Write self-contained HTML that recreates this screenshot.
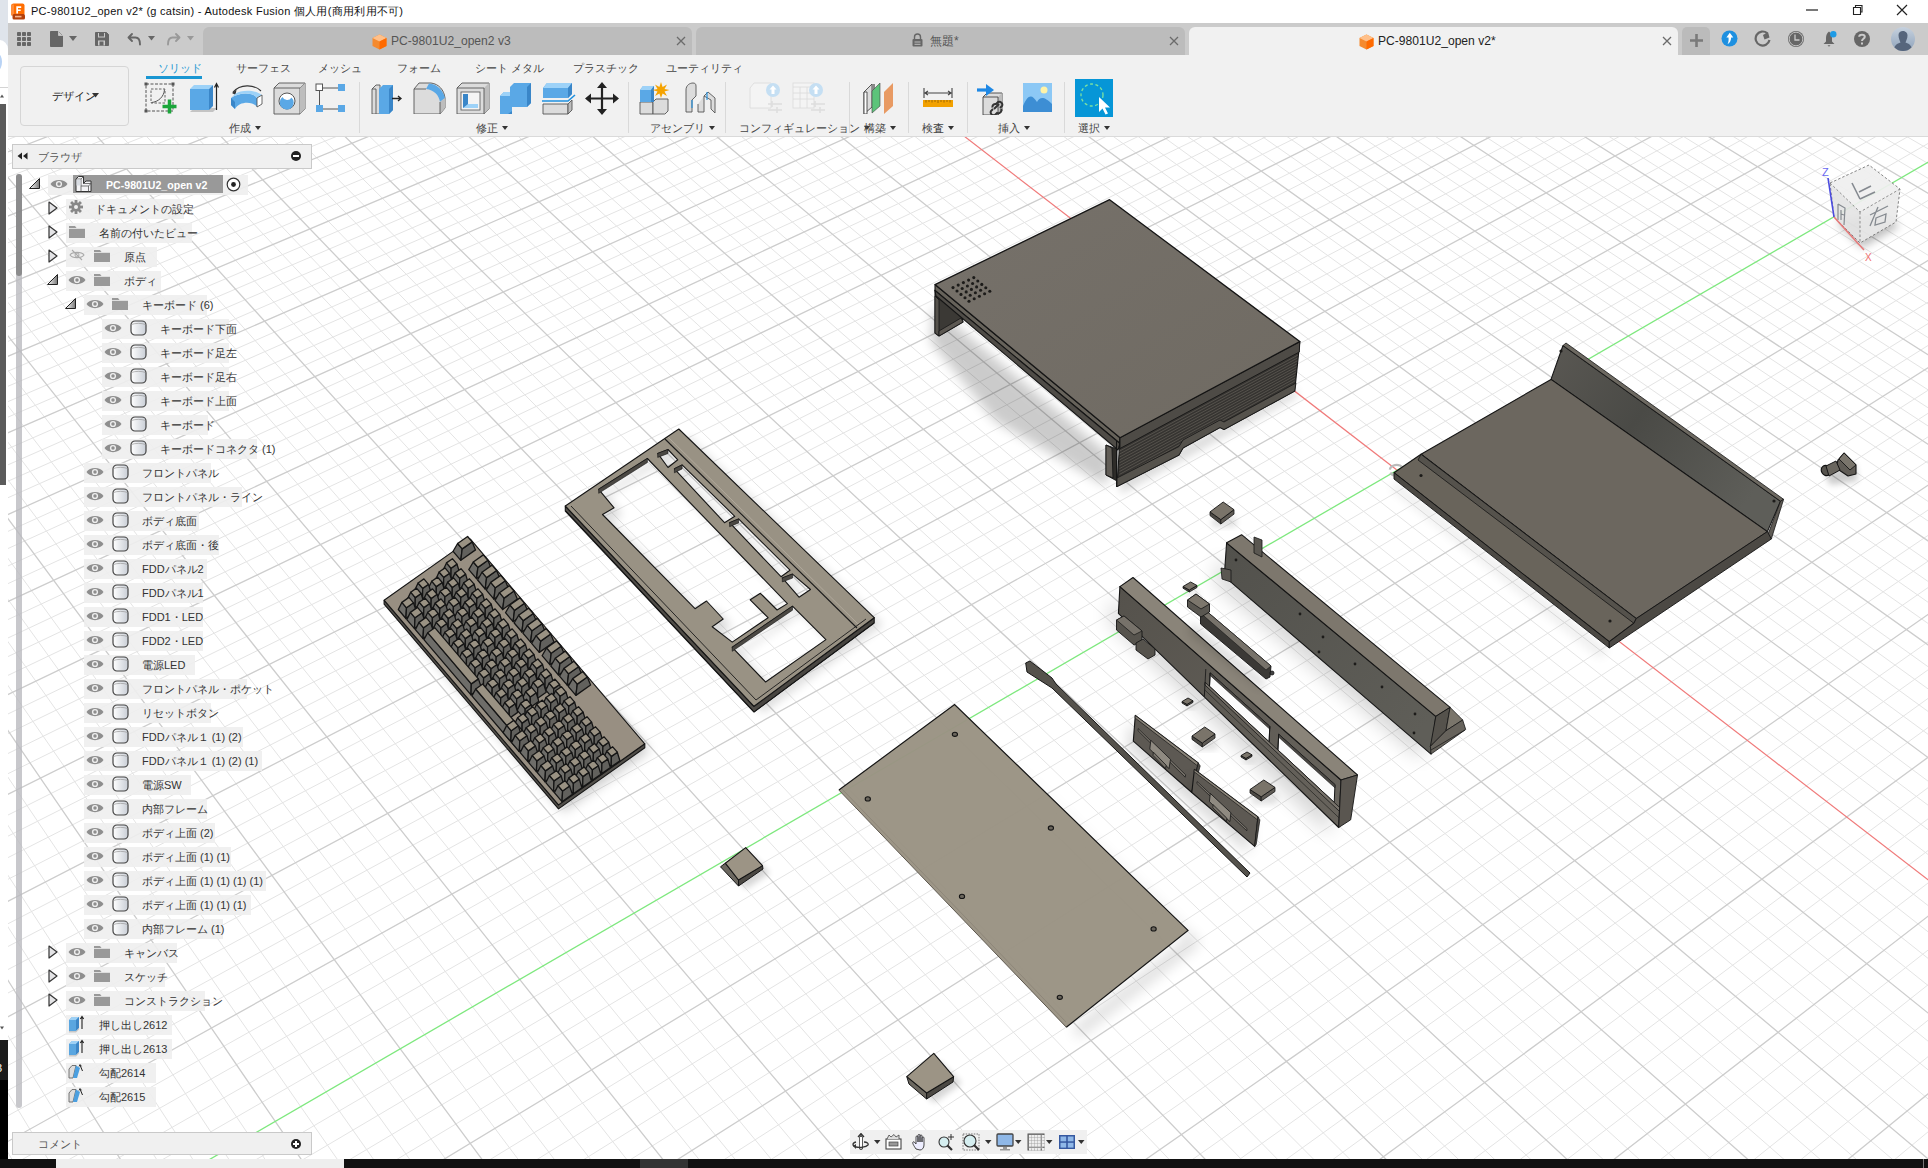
<!DOCTYPE html><html><head><meta charset="utf-8"><style>
*{margin:0;padding:0}
html,body{width:1928px;height:1168px;overflow:hidden;background:#fff;font-family:"Liberation Sans",sans-serif}
.title{position:absolute;left:31px;top:4px;font-size:11px;letter-spacing:0.28px;color:#111;white-space:nowrap;line-height:15px}
.tabt{position:absolute;top:34px;font-size:12.1px;line-height:15px;white-space:nowrap}
.tl{position:absolute;font-size:11px;line-height:14px;white-space:nowrap;color:#444}
.dd{display:inline-block;width:0;height:0;border-left:3.5px solid transparent;border-right:3.5px solid transparent;border-top:4px solid #333;margin-left:4px;vertical-align:2px}
.bhead{position:absolute;left:12px;top:144px;width:300px;height:25px;background:#f0f0f0;border:1px solid #c9c9c9;box-sizing:border-box}
.bhead .btitle{position:absolute;left:25px;top:5px;font-size:11px;line-height:14px;color:#555}
.bhead .rew{position:absolute;left:4px;top:6px;font-size:7px;letter-spacing:-3px;color:#222;line-height:12px}
.bhead .minus{position:absolute;left:278px;top:6px;width:10px;height:10px;border-radius:50%;background:#222}
.bhead .minus:after{content:"";position:absolute;left:2px;top:4px;width:6px;height:2px;background:#fff}
.bhead .plus{position:absolute;left:278px;top:6px;width:10px;height:10px;border-radius:50%;background:#222}
.bhead .plus:after{content:"";position:absolute;left:2px;top:4px;width:6px;height:2px;background:#fff}
.bhead .plus:before{content:"";position:absolute;left:4px;top:2px;width:2px;height:6px;background:#fff;z-index:1}
.rbg{position:absolute;height:20px;margin-top:-0.5px;background:rgba(238,238,238,0.9)}
.rtxt{position:absolute;font-size:11px;line-height:19px;margin-top:1px;color:#333;white-space:nowrap}
</style></head><body>
<svg style="position:absolute;left:0;top:0" width="1928" height="1168" viewBox="0 0 1928 1168"><defs><clipPath id="vp"><rect x="8" y="137" width="1920" height="1022"/></clipPath></defs><g clip-path="url(#vp)"><rect x="8" y="137" width="1920" height="1022" fill="#fff"/>
<path d="M-567.5 320.7L1171.0 -336.9M-561.4 331.6L1181.2 -331.2M-555.3 342.6L1191.4 -325.4M-549.0 353.7L1201.7 -319.5M-536.4 376.1L1222.4 -307.8M-530.0 387.5L1232.9 -301.8M-523.6 399.0L1243.4 -295.9M-517.1 410.6L1254.1 -289.8M-503.9 434.1L1275.5 -277.7M-497.2 446.0L1286.4 -271.5M-490.4 458.1L1297.3 -265.3M-483.6 470.2L1308.3 -259.1M-469.7 494.9L1330.5 -246.5M-462.7 507.4L1341.7 -240.2M-455.6 520.0L1353.0 -233.8M-448.4 532.8L1364.3 -227.3M-433.9 558.7L1387.3 -214.3M-426.5 571.8L1398.9 -207.7M-419.0 585.1L1410.6 -201.1M-411.5 598.5L1422.4 -194.4M-396.2 625.7L1446.2 -180.9M-388.5 639.5L1458.2 -174.1M-380.6 653.5L1470.3 -167.2M-372.7 667.6L1482.5 -160.3M-356.6 696.2L1507.2 -146.3M-348.5 710.7L1519.7 -139.2M-340.2 725.4L1532.2 -132.1M-331.9 740.3L1544.9 -124.9M-314.9 770.4L1570.5 -110.4M-306.3 785.8L1583.4 -103.1M-297.6 801.3L1596.4 -95.7M-288.8 816.9L1609.6 -88.3M-270.9 848.8L1636.1 -73.2M-261.8 864.9L1649.5 -65.6M-252.7 881.3L1663.1 -57.9M-243.4 897.8L1676.7 -50.2M-224.5 931.5L1704.3 -34.6M-214.9 948.6L1718.2 -26.7M-205.1 965.9L1732.3 -18.7M-195.3 983.4L1746.4 -10.7M-175.3 1019.0L1775.1 5.6M-165.1 1037.1L1789.6 13.8M-154.8 1055.4L1804.2 22.1M-144.4 1074.0L1818.9 30.4M-123.2 1111.7L1848.7 47.3M-112.4 1130.9L1863.8 55.9M-101.5 1150.4L1879.0 64.5M-90.5 1170.1L1894.3 73.2M-67.9 1210.1L1925.3 90.8M-56.5 1230.6L1941.0 99.7M-44.9 1251.2L1956.9 108.7M-33.1 1272.2L1972.8 117.7M-9.1 1314.8L2005.1 136.0M3.1 1336.6L2021.5 145.3M15.4 1358.6L2038.0 154.7M28.0 1380.9L2054.6 164.1M53.5 1426.3L2088.3 183.2M66.5 1449.5L2105.4 192.9M79.7 1473.0L2122.6 202.6M93.1 1496.8L2140.0 212.5M120.4 1545.4L2175.1 232.4M134.3 1570.2L2192.9 242.5M148.4 1595.3L2210.9 252.7M162.8 1620.8L2229.0 263.0M192.0 1672.8L2265.8 283.8M206.9 1699.4L2284.4 294.4M222.0 1726.4L2303.1 305.0M237.4 1753.7L2322.1 315.8M268.8 1809.5L2360.5 337.5M284.8 1838.1L2379.9 348.6M301.1 1867.0L2399.6 359.7M317.6 1896.4L2419.4 370.9M351.3 1956.5L2459.6 393.7M368.6 1987.2L2480.0 405.3M386.1 2018.5L2500.5 416.9M403.9 2050.1L2521.3 428.7M440.3 2115.0L2563.4 452.6M459.0 2148.2L2584.8 464.7M477.9 2181.9L2606.3 476.9M497.2 2216.2L2628.1 489.3M536.6 2286.4L2672.3 514.3M556.8 2322.4L2694.7 527.0M577.4 2359.0L2717.3 539.8M598.3 2396.1L2740.1 552.8M-567.5 320.7L619.5 2433.9M-523.6 304.1L686.2 2375.8M-501.9 295.9L718.9 2347.3M-480.3 287.7L751.2 2319.1M-458.8 279.6L783.1 2291.3M-416.3 263.5L845.7 2236.8M-395.3 255.6L876.5 2210.0M-374.4 247.7L906.8 2183.6M-353.7 239.8L936.8 2157.5M-312.7 224.3L995.6 2106.2M-292.3 216.6L1024.5 2081.0M-272.1 209.0L1053.1 2056.1M-252.1 201.4L1081.3 2031.5M-212.4 186.4L1136.8 1983.2M-192.7 178.9L1164.0 1959.5M-173.2 171.5L1190.9 1936.0M-153.7 164.2L1217.5 1912.8M-115.3 149.7L1269.9 1867.2M-96.3 142.5L1295.6 1844.8M-77.3 135.3L1321.0 1822.6M-58.5 128.2L1346.1 1800.7M-21.3 114.1L1395.6 1757.6M-2.9 107.1L1419.9 1736.5M15.5 100.2L1444.0 1715.5M33.7 93.3L1467.7 1694.8M69.8 79.7L1514.6 1654.0M87.6 72.9L1537.6 1633.9M105.4 66.2L1560.4 1614.1M123.0 59.5L1582.9 1594.4M158.0 46.3L1627.3 1555.8M175.3 39.7L1649.1 1536.7M192.6 33.2L1670.7 1517.9M209.7 26.7L1692.1 1499.2M243.6 13.9L1734.2 1462.5M260.4 7.5L1755.0 1444.5M277.1 1.2L1775.5 1426.6M293.7 -5.1L1795.8 1408.9M326.6 -17.5L1835.9 1374.0M342.9 -23.7L1855.6 1356.8M359.2 -29.8L1875.1 1339.8M375.3 -35.9L1894.5 1322.9M407.2 -48.0L1932.6 1289.7M423.1 -54.0L1951.4 1273.3M438.8 -59.9L1970.0 1257.1M454.5 -65.9L1988.4 1241.1M485.5 -77.6L2024.7 1209.4M500.9 -83.4L2042.6 1193.8M516.2 -89.2L2060.3 1178.4M531.4 -95.0L2077.9 1163.1M561.5 -106.4L2112.5 1132.9M576.5 -112.0L2129.6 1118.0M591.3 -117.6L2146.5 1103.3M606.1 -123.2L2163.3 1088.6M635.4 -134.3L2196.4 1059.8M649.9 -139.8L2212.7 1045.6M664.4 -145.3L2228.9 1031.5M678.8 -150.7L2244.9 1017.5M707.3 -161.5L2276.5 990.0M721.4 -166.8L2292.1 976.4M735.4 -172.1L2307.6 962.9M749.4 -177.4L2322.9 949.5M777.1 -187.9L2353.2 923.2M790.9 -193.1L2368.2 910.1M804.6 -198.3L2383.0 897.2M818.2 -203.4L2397.6 884.4M845.1 -213.6L2426.6 859.2M858.5 -218.7L2440.9 846.7M871.8 -223.7L2455.1 834.3M885.0 -228.7L2469.2 822.1M911.3 -238.7L2497.0 797.9M924.3 -243.6L2510.7 785.9M937.3 -248.5L2524.3 774.0M950.2 -253.4L2537.8 762.3M975.7 -263.0L2564.5 739.0M988.4 -267.8L2577.7 727.5M1001.1 -272.6L2590.8 716.2M1013.6 -277.4L2603.7 704.9M1038.5 -286.8L2629.3 682.5M1050.9 -291.5L2642.0 671.5M1063.2 -296.1L2654.5 660.6M1075.4 -300.7L2667.0 649.7M1099.7 -309.9L2691.6 628.3M1111.7 -314.5L2703.8 617.7M1123.7 -319.0L2715.8 607.2M1135.6 -323.5L2727.8 596.7M1159.3 -332.5L2751.5 576.1M1171.0 -336.9L2763.2 565.9" stroke="#e4e4e4" stroke-width="1" fill="none"/>
<path d="M-542.8 364.8L1212.0 -313.7M-510.5 422.3L1264.8 -283.8M-476.7 482.5L1319.3 -252.8M-441.2 545.7L1375.8 -220.8M-403.9 612.0L1434.2 -187.7M-364.7 681.8L1494.8 -153.3M-323.4 755.3L1557.6 -117.7M-279.9 832.8L1622.8 -80.8M-234.0 914.6L1690.4 -42.4M-185.4 1001.1L1760.7 -2.6M-133.9 1092.7L1833.7 38.9M-79.3 1190.0L1909.8 82.0M40.7 1403.5L2071.4 173.6M106.7 1521.0L2157.5 222.4M177.3 1646.7L2247.3 273.4M253.0 1781.4L2341.2 326.6M334.3 1926.2L2439.4 382.3M422.0 2082.3L2542.3 440.6M516.8 2251.0L2650.1 501.7M619.5 2433.9L2763.2 565.9M-545.5 312.4L653.1 2404.7M-437.5 271.5L814.6 2263.9M-333.1 232.1L966.4 2131.7M-232.2 193.9L1109.2 2007.2M-134.5 156.9L1243.9 1889.9M-39.9 121.1L1371.0 1779.1M51.8 86.5L1491.3 1674.3M140.6 52.9L1605.2 1575.0M226.7 20.3L1713.3 1480.8M310.2 -11.3L1816.0 1391.3M391.3 -42.0L1913.6 1306.2M470.0 -71.7L2006.6 1225.2M546.5 -100.7L2095.3 1147.9M693.1 -156.1L2260.8 1003.7M763.3 -182.7L2338.1 936.3M831.7 -208.5L2412.2 871.8M898.2 -233.7L2483.2 809.9M963.0 -258.2L2551.2 750.6M1026.1 -282.1L2616.6 693.7M1087.6 -305.3L2679.4 639.0M1147.5 -328.0L2739.7 586.4" stroke="#cdcdcd" stroke-width="1.3" fill="none"/>
<path d="M620.8 -128.8L2179.9 1074.2" stroke="#f07a7a" stroke-width="1.2" fill="none"/>
<path d="M-21.2 1293.4L1988.9 126.8" stroke="#7ee87e" stroke-width="1.3" fill="none"/>
<defs><filter id="bl1" x="-30%" y="-30%" width="160%" height="160%"><feGaussianBlur stdDeviation="1"/></filter><filter id="bl2" x="-30%" y="-30%" width="160%" height="160%"><feGaussianBlur stdDeviation="2"/></filter><filter id="bl3" x="-30%" y="-30%" width="160%" height="160%"><feGaussianBlur stdDeviation="3"/></filter><filter id="bl4" x="-30%" y="-30%" width="160%" height="160%"><feGaussianBlur stdDeviation="4"/></filter><filter id="bl5" x="-30%" y="-30%" width="160%" height="160%"><feGaussianBlur stdDeviation="5"/></filter><filter id="bl6" x="-30%" y="-30%" width="160%" height="160%"><feGaussianBlur stdDeviation="6"/></filter><filter id="bl7" x="-30%" y="-30%" width="160%" height="160%"><feGaussianBlur stdDeviation="7"/></filter><filter id="bl8" x="-30%" y="-30%" width="160%" height="160%"><feGaussianBlur stdDeviation="8"/></filter><filter id="bl9" x="-30%" y="-30%" width="160%" height="160%"><feGaussianBlur stdDeviation="9"/></filter><filter id="bl10" x="-30%" y="-30%" width="160%" height="160%"><feGaussianBlur stdDeviation="10"/></filter><filter id="bl11" x="-30%" y="-30%" width="160%" height="160%"><feGaussianBlur stdDeviation="11"/></filter><filter id="bl12" x="-30%" y="-30%" width="160%" height="160%"><feGaussianBlur stdDeviation="12"/></filter><filter id="bl13" x="-30%" y="-30%" width="160%" height="160%"><feGaussianBlur stdDeviation="13"/></filter><filter id="bl14" x="-30%" y="-30%" width="160%" height="160%"><feGaussianBlur stdDeviation="14"/></filter><filter id="bl15" x="-30%" y="-30%" width="160%" height="160%"><feGaussianBlur stdDeviation="15"/></filter><filter id="bl16" x="-30%" y="-30%" width="160%" height="160%"><feGaussianBlur stdDeviation="16"/></filter><linearGradient id="gTop" x1="0" y1="0" x2="1" y2="1"><stop offset="0" stop-color="#76716a"/><stop offset="1" stop-color="#6f6a62"/></linearGradient><linearGradient id="gWall" x1="0" y1="0" x2="1" y2="0.6"><stop offset="0" stop-color="#5a5853"/><stop offset="0.45" stop-color="#4a4a46"/><stop offset="1" stop-color="#5e5e59"/></linearGradient><linearGradient id="gBar" x1="0" y1="0" x2="1" y2="0.8"><stop offset="0" stop-color="#52514c"/><stop offset="1" stop-color="#5f5e58"/></linearGradient><linearGradient id="gFace" x1="0" y1="0" x2="1" y2="0.9"><stop offset="0" stop-color="#55524c"/><stop offset="1" stop-color="#67635c"/></linearGradient></defs>
<path d="M1396.8 469.6m-7 0a7 5.5 0 1 1 0.5 3" fill="none" stroke="#bbb" stroke-width="2.2"/>
<path d="M968.0 720.0L1200.0 943.0L1078.0 1038.0L1074.0 1028.0L1188.0 938.0z" fill="#000" opacity="0.15" filter="url(#bl7)"/>
<path d="M954.6 704.5L1188.0 930.4L1066.3 1027.2L838.9 790.1z" fill="#9a9383" stroke="none" stroke-width="0" stroke-linejoin="round" fill-opacity="0.97"/>
<path d="M838.9 790.1L954.6 704.5L1188.0 930.4L1066.3 1027.2" fill="none" stroke="#151515" stroke-width="1.2" />
<path d="M838.9 790.1L1066.3 1027.2" fill="none" stroke="#5c564c" stroke-width="1.0" />
<path d="M842.0 789.0L1066.0 1022.0" fill="none" stroke="#8a8376" stroke-width="0.8" />
<ellipse cx="954.9" cy="734.3" rx="2.6" ry="2.1" fill="#6b665d" stroke="#151515" stroke-width="1.1"/>
<ellipse cx="867.8" cy="798.9" rx="2.6" ry="2.1" fill="#6b665d" stroke="#151515" stroke-width="1.1"/>
<ellipse cx="1050.9" cy="828" rx="2.6" ry="2.1" fill="#6b665d" stroke="#151515" stroke-width="1.1"/>
<ellipse cx="962" cy="896.4" rx="2.6" ry="2.1" fill="#6b665d" stroke="#151515" stroke-width="1.1"/>
<ellipse cx="1153.6" cy="928.9" rx="2.6" ry="2.1" fill="#6b665d" stroke="#151515" stroke-width="1.1"/>
<ellipse cx="1059.8" cy="997.3" rx="2.6" ry="2.1" fill="#6b665d" stroke="#151515" stroke-width="1.1"/>
<path d="M729.0 871.0L752.0 855.0L770.0 873.0L746.0 889.0z" fill="#000" opacity="0.16" filter="url(#bl3)"/>
<path d="M720.5 866.8L725.3 863.2L738.5 880.0L738.5 886.0z" fill="#6b675f" stroke="#151515" stroke-width="1.0" stroke-linejoin="round" />
<path d="M738.5 880.0L762.5 865.6L763.0 869.0L738.5 886.0z" fill="#4b4843" stroke="#151515" stroke-width="1.0" stroke-linejoin="round" />
<path d="M725.3 863.2L745.7 847.6L762.5 865.6L738.5 880.0z" fill="#9c9485" stroke="#151515" stroke-width="1.1" stroke-linejoin="round" />
<path d="M914.0 1083.0L939.0 1061.0L962.0 1083.0L934.0 1103.0z" fill="#000" opacity="0.16" filter="url(#bl3)"/>
<path d="M906.8 1076.7L909.0 1084.0L926.6 1099.0L926.6 1093.0z" fill="#6b675f" stroke="#151515" stroke-width="1.0" stroke-linejoin="round" />
<path d="M926.6 1093.0L953.6 1076.7L953.0 1082.0L926.6 1099.0z" fill="#4b4843" stroke="#151515" stroke-width="1.0" stroke-linejoin="round" />
<path d="M906.8 1076.7L933.8 1053.3L953.6 1076.7L926.6 1093.0z" fill="#9c9485" stroke="#151515" stroke-width="1.1" stroke-linejoin="round" />
<path d="M406.5 627.7L563.5 811.9L649.8 750.8L614.9 709.9z" fill="#000" opacity="0.2" filter="url(#bl6)"/>
<path d="M384.1 600.2L558.5 804.9L644.8 743.8L644.8 747.8L558.5 808.9L384.1 604.2z" fill="#514e49" stroke="#151515" stroke-width="1.1" stroke-linejoin="round" />
<path d="M384.1 600.2L558.5 804.9L644.8 743.8L470.4 539.1z" fill="#988f82" stroke="#151515" stroke-width="1.1" stroke-linejoin="round" />
<path d="M453.1 551.3L460.8 560.3L462.2 548.9L457.6 543.5z" fill="#6e6d69" stroke="#151515" stroke-width="1.3" stroke-linejoin="round" /><path d="M460.8 560.3L475.5 549.9L472.2 541.9L462.2 548.9z" fill="#62615d" stroke="#151515" stroke-width="1.3" stroke-linejoin="round" /><path d="M457.6 543.5L462.2 548.9L472.2 541.9L467.6 536.5z" fill="#9a9283" stroke="#151515" stroke-width="1.3" stroke-linejoin="round" />
<path d="M468.8 569.7L476.5 578.7L477.9 567.4L473.3 562.0z" fill="#6e6d69" stroke="#151515" stroke-width="1.3" stroke-linejoin="round" /><path d="M476.5 578.7L491.2 568.4L487.9 560.3L477.9 567.4z" fill="#62615d" stroke="#151515" stroke-width="1.3" stroke-linejoin="round" /><path d="M473.3 562.0L477.9 567.4L487.9 560.3L483.3 554.9z" fill="#9a9283" stroke="#151515" stroke-width="1.3" stroke-linejoin="round" />
<path d="M477.6 580.0L485.2 589.0L486.6 577.6L482.0 572.2z" fill="#6e6d69" stroke="#151515" stroke-width="1.3" stroke-linejoin="round" /><path d="M485.2 589.0L499.9 578.6L496.6 570.5L486.6 577.6z" fill="#62615d" stroke="#151515" stroke-width="1.3" stroke-linejoin="round" /><path d="M482.0 572.2L486.6 577.6L496.6 570.5L492.0 565.1z" fill="#9a9283" stroke="#151515" stroke-width="1.3" stroke-linejoin="round" />
<path d="M486.3 590.2L493.9 599.2L495.3 587.8L490.7 582.4z" fill="#6e6d69" stroke="#151515" stroke-width="1.3" stroke-linejoin="round" /><path d="M493.9 599.2L508.6 588.8L505.3 580.8L495.3 587.8z" fill="#62615d" stroke="#151515" stroke-width="1.3" stroke-linejoin="round" /><path d="M490.7 582.4L495.3 587.8L505.3 580.8L500.7 575.4z" fill="#9a9283" stroke="#151515" stroke-width="1.3" stroke-linejoin="round" />
<path d="M495.0 600.4L502.7 609.5L504.1 598.1L499.5 592.7z" fill="#6e6d69" stroke="#151515" stroke-width="1.3" stroke-linejoin="round" /><path d="M502.7 609.5L517.3 599.1L514.0 591.0L504.1 598.1z" fill="#62615d" stroke="#151515" stroke-width="1.3" stroke-linejoin="round" /><path d="M499.5 592.7L504.1 598.1L514.0 591.0L509.4 585.6z" fill="#9a9283" stroke="#151515" stroke-width="1.3" stroke-linejoin="round" />
<path d="M505.5 612.7L513.1 621.7L514.5 610.4L509.9 605.0z" fill="#6e6d69" stroke="#151515" stroke-width="1.3" stroke-linejoin="round" /><path d="M513.1 621.7L527.8 611.3L524.5 603.3L514.5 610.4z" fill="#62615d" stroke="#151515" stroke-width="1.3" stroke-linejoin="round" /><path d="M509.9 605.0L514.5 610.4L524.5 603.3L519.9 597.9z" fill="#9a9283" stroke="#151515" stroke-width="1.3" stroke-linejoin="round" />
<path d="M514.2 623.0L521.9 632.0L523.3 620.6L518.6 615.2z" fill="#6e6d69" stroke="#151515" stroke-width="1.3" stroke-linejoin="round" /><path d="M521.9 632.0L536.5 621.6L533.2 613.5L523.3 620.6z" fill="#62615d" stroke="#151515" stroke-width="1.3" stroke-linejoin="round" /><path d="M518.6 615.2L523.3 620.6L533.2 613.5L528.6 608.1z" fill="#9a9283" stroke="#151515" stroke-width="1.3" stroke-linejoin="round" />
<path d="M522.9 633.2L530.6 642.2L532.0 630.8L527.4 625.4z" fill="#6e6d69" stroke="#151515" stroke-width="1.3" stroke-linejoin="round" /><path d="M530.6 642.2L545.2 631.8L541.9 623.8L532.0 630.8z" fill="#62615d" stroke="#151515" stroke-width="1.3" stroke-linejoin="round" /><path d="M527.4 625.4L532.0 630.8L541.9 623.8L537.3 618.4z" fill="#9a9283" stroke="#151515" stroke-width="1.3" stroke-linejoin="round" />
<path d="M531.6 643.4L539.3 652.4L540.7 641.1L536.1 635.7z" fill="#6e6d69" stroke="#151515" stroke-width="1.3" stroke-linejoin="round" /><path d="M539.3 652.4L554.0 642.1L550.7 634.0L540.7 641.1z" fill="#62615d" stroke="#151515" stroke-width="1.3" stroke-linejoin="round" /><path d="M536.1 635.7L540.7 641.1L550.7 634.0L546.1 628.6z" fill="#9a9283" stroke="#151515" stroke-width="1.3" stroke-linejoin="round" />
<path d="M542.1 655.7L549.8 664.7L551.2 653.3L546.6 647.9z" fill="#6e6d69" stroke="#151515" stroke-width="1.3" stroke-linejoin="round" /><path d="M549.8 664.7L564.4 654.3L561.1 646.3L551.2 653.3z" fill="#62615d" stroke="#151515" stroke-width="1.3" stroke-linejoin="round" /><path d="M546.6 647.9L551.2 653.3L561.1 646.3L556.5 640.9z" fill="#9a9283" stroke="#151515" stroke-width="1.3" stroke-linejoin="round" />
<path d="M550.8 666.0L558.5 675.0L559.9 663.6L555.3 658.2z" fill="#6e6d69" stroke="#151515" stroke-width="1.3" stroke-linejoin="round" /><path d="M558.5 675.0L573.1 664.6L569.9 656.5L559.9 663.6z" fill="#62615d" stroke="#151515" stroke-width="1.3" stroke-linejoin="round" /><path d="M555.3 658.2L559.9 663.6L569.9 656.5L565.2 651.1z" fill="#9a9283" stroke="#151515" stroke-width="1.3" stroke-linejoin="round" />
<path d="M559.5 676.2L567.2 685.2L568.6 673.8L564.0 668.4z" fill="#6e6d69" stroke="#151515" stroke-width="1.3" stroke-linejoin="round" /><path d="M567.2 685.2L581.9 674.8L578.6 666.8L568.6 673.8z" fill="#62615d" stroke="#151515" stroke-width="1.3" stroke-linejoin="round" /><path d="M564.0 668.4L568.6 673.8L578.6 666.8L574.0 661.3z" fill="#9a9283" stroke="#151515" stroke-width="1.3" stroke-linejoin="round" />
<path d="M568.2 686.4L575.9 695.4L577.3 684.1L572.7 678.6z" fill="#6e6d69" stroke="#151515" stroke-width="1.3" stroke-linejoin="round" /><path d="M575.9 695.4L590.6 685.0L587.3 677.0L577.3 684.1z" fill="#62615d" stroke="#151515" stroke-width="1.3" stroke-linejoin="round" /><path d="M572.7 678.6L577.3 684.1L587.3 677.0L582.7 671.6z" fill="#9a9283" stroke="#151515" stroke-width="1.3" stroke-linejoin="round" />
<path d="M443.3 569.8L451.0 578.8L451.1 568.3L446.5 562.9z" fill="#6e6d69" stroke="#151515" stroke-width="1.3" stroke-linejoin="round" /><path d="M451.0 578.8L459.6 572.7L457.0 564.1L451.1 568.3z" fill="#62615d" stroke="#151515" stroke-width="1.3" stroke-linejoin="round" /><path d="M446.5 562.9L451.1 568.3L457.0 564.1L452.4 558.7z" fill="#9a9283" stroke="#151515" stroke-width="1.3" stroke-linejoin="round" />
<path d="M451.8 579.8L459.5 588.8L459.7 578.3L455.1 572.9z" fill="#6e6d69" stroke="#151515" stroke-width="1.3" stroke-linejoin="round" /><path d="M459.5 588.8L468.1 582.7L465.6 574.1L459.7 578.3z" fill="#62615d" stroke="#151515" stroke-width="1.3" stroke-linejoin="round" /><path d="M455.1 572.9L459.7 578.3L465.6 574.1L461.0 568.7z" fill="#9a9283" stroke="#151515" stroke-width="1.3" stroke-linejoin="round" />
<path d="M460.4 589.8L468.0 598.9L468.2 588.3L463.6 582.9z" fill="#6e6d69" stroke="#151515" stroke-width="1.3" stroke-linejoin="round" /><path d="M468.0 598.9L476.7 592.7L474.1 584.2L468.2 588.3z" fill="#62615d" stroke="#151515" stroke-width="1.3" stroke-linejoin="round" /><path d="M463.6 582.9L468.2 588.3L474.1 584.2L469.5 578.8z" fill="#9a9283" stroke="#151515" stroke-width="1.3" stroke-linejoin="round" />
<path d="M468.9 599.9L476.6 608.9L476.8 598.4L472.2 593.0z" fill="#6e6d69" stroke="#151515" stroke-width="1.3" stroke-linejoin="round" /><path d="M476.6 608.9L485.2 602.8L482.6 594.2L476.8 598.4z" fill="#62615d" stroke="#151515" stroke-width="1.3" stroke-linejoin="round" /><path d="M472.2 593.0L476.8 598.4L482.6 594.2L478.0 588.8z" fill="#9a9283" stroke="#151515" stroke-width="1.3" stroke-linejoin="round" />
<path d="M477.5 609.9L485.1 618.9L485.3 608.4L480.7 603.0z" fill="#6e6d69" stroke="#151515" stroke-width="1.3" stroke-linejoin="round" /><path d="M485.1 618.9L493.8 612.8L491.2 604.2L485.3 608.4z" fill="#62615d" stroke="#151515" stroke-width="1.3" stroke-linejoin="round" /><path d="M480.7 603.0L485.3 608.4L491.2 604.2L486.6 598.8z" fill="#9a9283" stroke="#151515" stroke-width="1.3" stroke-linejoin="round" />
<path d="M486.0 619.9L493.7 628.9L493.9 618.4L489.3 613.0z" fill="#6e6d69" stroke="#151515" stroke-width="1.3" stroke-linejoin="round" /><path d="M493.7 628.9L502.3 622.8L499.7 614.3L493.9 618.4z" fill="#62615d" stroke="#151515" stroke-width="1.3" stroke-linejoin="round" /><path d="M489.3 613.0L493.9 618.4L499.7 614.3L495.1 608.9z" fill="#9a9283" stroke="#151515" stroke-width="1.3" stroke-linejoin="round" />
<path d="M494.6 630.0L502.2 639.0L502.4 628.5L497.8 623.0z" fill="#6e6d69" stroke="#151515" stroke-width="1.3" stroke-linejoin="round" /><path d="M502.2 639.0L510.9 632.9L508.3 624.3L502.4 628.5z" fill="#62615d" stroke="#151515" stroke-width="1.3" stroke-linejoin="round" /><path d="M497.8 623.0L502.4 628.5L508.3 624.3L503.7 618.9z" fill="#9a9283" stroke="#151515" stroke-width="1.3" stroke-linejoin="round" />
<path d="M503.1 640.0L510.8 649.0L511.0 638.5L506.4 633.1z" fill="#6e6d69" stroke="#151515" stroke-width="1.3" stroke-linejoin="round" /><path d="M510.8 649.0L519.4 642.9L516.8 634.3L511.0 638.5z" fill="#62615d" stroke="#151515" stroke-width="1.3" stroke-linejoin="round" /><path d="M506.4 633.1L511.0 638.5L516.8 634.3L512.2 628.9z" fill="#9a9283" stroke="#151515" stroke-width="1.3" stroke-linejoin="round" />
<path d="M511.6 650.0L519.3 659.0L519.5 648.5L514.9 643.1z" fill="#6e6d69" stroke="#151515" stroke-width="1.3" stroke-linejoin="round" /><path d="M519.3 659.0L527.9 652.9L525.4 644.4L519.5 648.5z" fill="#62615d" stroke="#151515" stroke-width="1.3" stroke-linejoin="round" /><path d="M514.9 643.1L519.5 648.5L525.4 644.4L520.8 639.0z" fill="#9a9283" stroke="#151515" stroke-width="1.3" stroke-linejoin="round" />
<path d="M520.2 660.1L527.9 669.1L528.1 658.5L523.4 653.1z" fill="#6e6d69" stroke="#151515" stroke-width="1.3" stroke-linejoin="round" /><path d="M527.9 669.1L536.5 663.0L533.9 654.4L528.1 658.5z" fill="#62615d" stroke="#151515" stroke-width="1.3" stroke-linejoin="round" /><path d="M523.4 653.1L528.1 658.5L533.9 654.4L529.3 649.0z" fill="#9a9283" stroke="#151515" stroke-width="1.3" stroke-linejoin="round" />
<path d="M528.7 670.1L536.4 679.1L536.6 668.6L532.0 663.2z" fill="#6e6d69" stroke="#151515" stroke-width="1.3" stroke-linejoin="round" /><path d="M536.4 679.1L545.0 673.0L542.5 664.4L536.6 668.6z" fill="#62615d" stroke="#151515" stroke-width="1.3" stroke-linejoin="round" /><path d="M532.0 663.2L536.6 668.6L542.5 664.4L537.9 659.0z" fill="#9a9283" stroke="#151515" stroke-width="1.3" stroke-linejoin="round" />
<path d="M537.3 680.1L545.0 689.1L545.1 678.6L540.5 673.2z" fill="#6e6d69" stroke="#151515" stroke-width="1.3" stroke-linejoin="round" /><path d="M545.0 689.1L553.6 683.0L551.0 674.4L545.1 678.6z" fill="#62615d" stroke="#151515" stroke-width="1.3" stroke-linejoin="round" /><path d="M540.5 673.2L545.1 678.6L551.0 674.4L546.4 669.0z" fill="#9a9283" stroke="#151515" stroke-width="1.3" stroke-linejoin="round" />
<path d="M545.8 690.2L553.5 699.2L553.7 688.6L549.1 683.2z" fill="#6e6d69" stroke="#151515" stroke-width="1.3" stroke-linejoin="round" /><path d="M553.5 699.2L562.1 693.0L559.6 684.5L553.7 688.6z" fill="#62615d" stroke="#151515" stroke-width="1.3" stroke-linejoin="round" /><path d="M549.1 683.2L553.7 688.6L559.6 684.5L555.0 679.1z" fill="#9a9283" stroke="#151515" stroke-width="1.3" stroke-linejoin="round" />
<path d="M552.3 697.7L560.0 706.7L560.1 696.2L555.5 690.8z" fill="#6e6d69" stroke="#151515" stroke-width="1.3" stroke-linejoin="round" /><path d="M560.0 706.7L568.6 700.6L566.0 692.1L560.1 696.2z" fill="#62615d" stroke="#151515" stroke-width="1.3" stroke-linejoin="round" /><path d="M555.5 690.8L560.1 696.2L566.0 692.1L561.4 686.7z" fill="#9a9283" stroke="#151515" stroke-width="1.3" stroke-linejoin="round" />
<path d="M560.8 707.8L568.5 716.8L568.7 706.2L564.1 700.8z" fill="#6e6d69" stroke="#151515" stroke-width="1.3" stroke-linejoin="round" /><path d="M568.5 716.8L577.1 710.7L574.6 702.1L568.7 706.2z" fill="#62615d" stroke="#151515" stroke-width="1.3" stroke-linejoin="round" /><path d="M564.1 700.8L568.7 706.2L574.6 702.1L570.0 696.7z" fill="#9a9283" stroke="#151515" stroke-width="1.3" stroke-linejoin="round" />
<path d="M569.4 717.8L577.0 726.8L577.2 716.3L572.6 710.9z" fill="#6e6d69" stroke="#151515" stroke-width="1.3" stroke-linejoin="round" /><path d="M577.0 726.8L585.7 720.7L583.1 712.1L577.2 716.3z" fill="#62615d" stroke="#151515" stroke-width="1.3" stroke-linejoin="round" /><path d="M572.6 710.9L577.2 716.3L583.1 712.1L578.5 706.7z" fill="#9a9283" stroke="#151515" stroke-width="1.3" stroke-linejoin="round" />
<path d="M577.9 727.8L585.6 736.8L585.8 726.3L581.2 720.9z" fill="#6e6d69" stroke="#151515" stroke-width="1.3" stroke-linejoin="round" /><path d="M585.6 736.8L594.2 730.7L591.6 722.1L585.8 726.3z" fill="#62615d" stroke="#151515" stroke-width="1.3" stroke-linejoin="round" /><path d="M581.2 720.9L585.8 726.3L591.6 722.1L587.0 716.7z" fill="#9a9283" stroke="#151515" stroke-width="1.3" stroke-linejoin="round" />
<path d="M586.5 737.8L594.1 746.9L594.3 736.3L589.7 730.9z" fill="#6e6d69" stroke="#151515" stroke-width="1.3" stroke-linejoin="round" /><path d="M594.1 746.9L602.8 740.7L600.2 732.2L594.3 736.3z" fill="#62615d" stroke="#151515" stroke-width="1.3" stroke-linejoin="round" /><path d="M589.7 730.9L594.3 736.3L600.2 732.2L595.6 726.8z" fill="#9a9283" stroke="#151515" stroke-width="1.3" stroke-linejoin="round" />
<path d="M595.0 747.9L602.7 756.9L602.9 746.4L598.3 741.0z" fill="#6e6d69" stroke="#151515" stroke-width="1.3" stroke-linejoin="round" /><path d="M602.7 756.9L611.3 750.8L608.7 742.2L602.9 746.4z" fill="#62615d" stroke="#151515" stroke-width="1.3" stroke-linejoin="round" /><path d="M598.3 741.0L602.9 746.4L608.7 742.2L604.1 736.8z" fill="#9a9283" stroke="#151515" stroke-width="1.3" stroke-linejoin="round" />
<path d="M603.6 757.9L611.2 766.9L611.4 756.4L606.8 751.0z" fill="#6e6d69" stroke="#151515" stroke-width="1.3" stroke-linejoin="round" /><path d="M611.2 766.9L619.9 760.8L617.3 752.2L611.4 756.4z" fill="#62615d" stroke="#151515" stroke-width="1.3" stroke-linejoin="round" /><path d="M606.8 751.0L611.4 756.4L617.3 752.2L612.7 746.8z" fill="#9a9283" stroke="#151515" stroke-width="1.3" stroke-linejoin="round" />
<path d="M435.9 579.0L443.6 588.0L443.7 577.4L439.1 572.0z" fill="#6e6d69" stroke="#151515" stroke-width="1.3" stroke-linejoin="round" /><path d="M443.6 588.0L452.2 581.9L449.6 573.3L443.7 577.4z" fill="#62615d" stroke="#151515" stroke-width="1.3" stroke-linejoin="round" /><path d="M439.1 572.0L443.7 577.4L449.6 573.3L445.0 567.9z" fill="#9a9283" stroke="#151515" stroke-width="1.3" stroke-linejoin="round" />
<path d="M444.4 589.0L452.1 598.0L452.3 587.5L447.7 582.1z" fill="#6e6d69" stroke="#151515" stroke-width="1.3" stroke-linejoin="round" /><path d="M452.1 598.0L460.7 591.9L458.2 583.3L452.3 587.5z" fill="#62615d" stroke="#151515" stroke-width="1.3" stroke-linejoin="round" /><path d="M447.7 582.1L452.3 587.5L458.2 583.3L453.6 577.9z" fill="#9a9283" stroke="#151515" stroke-width="1.3" stroke-linejoin="round" />
<path d="M453.0 599.0L460.6 608.0L460.8 597.5L456.2 592.1z" fill="#6e6d69" stroke="#151515" stroke-width="1.3" stroke-linejoin="round" /><path d="M460.6 608.0L469.3 601.9L466.7 593.4L460.8 597.5z" fill="#62615d" stroke="#151515" stroke-width="1.3" stroke-linejoin="round" /><path d="M456.2 592.1L460.8 597.5L466.7 593.4L462.1 588.0z" fill="#9a9283" stroke="#151515" stroke-width="1.3" stroke-linejoin="round" />
<path d="M461.5 609.1L469.2 618.1L469.4 607.5L464.8 602.1z" fill="#6e6d69" stroke="#151515" stroke-width="1.3" stroke-linejoin="round" /><path d="M469.2 618.1L477.8 612.0L475.2 603.4L469.4 607.5z" fill="#62615d" stroke="#151515" stroke-width="1.3" stroke-linejoin="round" /><path d="M464.8 602.1L469.4 607.5L475.2 603.4L470.6 598.0z" fill="#9a9283" stroke="#151515" stroke-width="1.3" stroke-linejoin="round" />
<path d="M470.1 619.1L477.7 628.1L477.9 617.6L473.3 612.2z" fill="#6e6d69" stroke="#151515" stroke-width="1.3" stroke-linejoin="round" /><path d="M477.7 628.1L486.4 622.0L483.8 613.4L477.9 617.6z" fill="#62615d" stroke="#151515" stroke-width="1.3" stroke-linejoin="round" /><path d="M473.3 612.2L477.9 617.6L483.8 613.4L479.2 608.0z" fill="#9a9283" stroke="#151515" stroke-width="1.3" stroke-linejoin="round" />
<path d="M478.6 629.1L486.3 638.1L486.5 627.6L481.9 622.2z" fill="#6e6d69" stroke="#151515" stroke-width="1.3" stroke-linejoin="round" /><path d="M486.3 638.1L494.9 632.0L492.3 623.4L486.5 627.6z" fill="#62615d" stroke="#151515" stroke-width="1.3" stroke-linejoin="round" /><path d="M481.9 622.2L486.5 627.6L492.3 623.4L487.7 618.0z" fill="#9a9283" stroke="#151515" stroke-width="1.3" stroke-linejoin="round" />
<path d="M487.2 639.1L494.8 648.2L495.0 637.6L490.4 632.2z" fill="#6e6d69" stroke="#151515" stroke-width="1.3" stroke-linejoin="round" /><path d="M494.8 648.2L503.5 642.0L500.9 633.5L495.0 637.6z" fill="#62615d" stroke="#151515" stroke-width="1.3" stroke-linejoin="round" /><path d="M490.4 632.2L495.0 637.6L500.9 633.5L496.3 628.1z" fill="#9a9283" stroke="#151515" stroke-width="1.3" stroke-linejoin="round" />
<path d="M495.7 649.2L503.4 658.2L503.6 647.7L499.0 642.3z" fill="#6e6d69" stroke="#151515" stroke-width="1.3" stroke-linejoin="round" /><path d="M503.4 658.2L512.0 652.1L509.4 643.5L503.6 647.7z" fill="#62615d" stroke="#151515" stroke-width="1.3" stroke-linejoin="round" /><path d="M499.0 642.3L503.6 647.7L509.4 643.5L504.8 638.1z" fill="#9a9283" stroke="#151515" stroke-width="1.3" stroke-linejoin="round" />
<path d="M504.2 659.2L511.9 668.2L512.1 657.7L507.5 652.3z" fill="#6e6d69" stroke="#151515" stroke-width="1.3" stroke-linejoin="round" /><path d="M511.9 668.2L520.5 662.1L518.0 653.5L512.1 657.7z" fill="#62615d" stroke="#151515" stroke-width="1.3" stroke-linejoin="round" /><path d="M507.5 652.3L512.1 657.7L518.0 653.5L513.4 648.1z" fill="#9a9283" stroke="#151515" stroke-width="1.3" stroke-linejoin="round" />
<path d="M512.8 669.2L520.5 678.2L520.7 667.7L516.0 662.3z" fill="#6e6d69" stroke="#151515" stroke-width="1.3" stroke-linejoin="round" /><path d="M520.5 678.2L529.1 672.1L526.5 663.6L520.7 667.7z" fill="#62615d" stroke="#151515" stroke-width="1.3" stroke-linejoin="round" /><path d="M516.0 662.3L520.7 667.7L526.5 663.6L521.9 658.2z" fill="#9a9283" stroke="#151515" stroke-width="1.3" stroke-linejoin="round" />
<path d="M521.3 679.3L529.0 688.3L529.2 677.8L524.6 672.3z" fill="#6e6d69" stroke="#151515" stroke-width="1.3" stroke-linejoin="round" /><path d="M529.0 688.3L537.6 682.2L535.1 673.6L529.2 677.8z" fill="#62615d" stroke="#151515" stroke-width="1.3" stroke-linejoin="round" /><path d="M524.6 672.3L529.2 677.8L535.1 673.6L530.5 668.2z" fill="#9a9283" stroke="#151515" stroke-width="1.3" stroke-linejoin="round" />
<path d="M529.9 689.3L537.6 698.3L537.7 687.8L533.1 682.4z" fill="#6e6d69" stroke="#151515" stroke-width="1.3" stroke-linejoin="round" /><path d="M537.6 698.3L546.2 692.2L543.6 683.6L537.7 687.8z" fill="#62615d" stroke="#151515" stroke-width="1.3" stroke-linejoin="round" /><path d="M533.1 682.4L537.7 687.8L543.6 683.6L539.0 678.2z" fill="#9a9283" stroke="#151515" stroke-width="1.3" stroke-linejoin="round" />
<path d="M542.8 704.4L550.5 713.5L550.7 702.9L546.0 697.5z" fill="#6e6d69" stroke="#151515" stroke-width="1.3" stroke-linejoin="round" /><path d="M550.5 713.5L559.1 707.3L556.5 698.8L550.7 702.9z" fill="#62615d" stroke="#151515" stroke-width="1.3" stroke-linejoin="round" /><path d="M546.0 697.5L550.7 702.9L556.5 698.8L551.9 693.4z" fill="#9a9283" stroke="#151515" stroke-width="1.3" stroke-linejoin="round" />
<path d="M551.3 714.5L559.0 723.5L559.2 713.0L554.6 707.6z" fill="#6e6d69" stroke="#151515" stroke-width="1.3" stroke-linejoin="round" /><path d="M559.0 723.5L567.6 717.4L565.1 708.8L559.2 713.0z" fill="#62615d" stroke="#151515" stroke-width="1.3" stroke-linejoin="round" /><path d="M554.6 707.6L559.2 713.0L565.1 708.8L560.5 703.4z" fill="#9a9283" stroke="#151515" stroke-width="1.3" stroke-linejoin="round" />
<path d="M559.9 724.5L567.6 733.5L567.7 723.0L563.1 717.6z" fill="#6e6d69" stroke="#151515" stroke-width="1.3" stroke-linejoin="round" /><path d="M567.6 733.5L576.2 727.4L573.6 718.8L567.7 723.0z" fill="#62615d" stroke="#151515" stroke-width="1.3" stroke-linejoin="round" /><path d="M563.1 717.6L567.7 723.0L573.6 718.8L569.0 713.4z" fill="#9a9283" stroke="#151515" stroke-width="1.3" stroke-linejoin="round" />
<path d="M568.4 734.5L576.1 743.5L576.3 733.0L571.7 727.6z" fill="#6e6d69" stroke="#151515" stroke-width="1.3" stroke-linejoin="round" /><path d="M576.1 743.5L584.7 737.4L582.2 728.9L576.3 733.0z" fill="#62615d" stroke="#151515" stroke-width="1.3" stroke-linejoin="round" /><path d="M571.7 727.6L576.3 733.0L582.2 728.9L577.6 723.5z" fill="#9a9283" stroke="#151515" stroke-width="1.3" stroke-linejoin="round" />
<path d="M577.0 744.6L584.6 753.6L584.8 743.1L580.2 737.6z" fill="#6e6d69" stroke="#151515" stroke-width="1.3" stroke-linejoin="round" /><path d="M584.6 753.6L593.3 747.5L590.7 738.9L584.8 743.1z" fill="#62615d" stroke="#151515" stroke-width="1.3" stroke-linejoin="round" /><path d="M580.2 737.6L584.8 743.1L590.7 738.9L586.1 733.5z" fill="#9a9283" stroke="#151515" stroke-width="1.3" stroke-linejoin="round" />
<path d="M585.5 754.6L593.2 763.6L593.4 753.1L588.8 747.7z" fill="#6e6d69" stroke="#151515" stroke-width="1.3" stroke-linejoin="round" /><path d="M593.2 763.6L601.8 757.5L599.2 748.9L593.4 753.1z" fill="#62615d" stroke="#151515" stroke-width="1.3" stroke-linejoin="round" /><path d="M588.8 747.7L593.4 753.1L599.2 748.9L594.6 743.5z" fill="#9a9283" stroke="#151515" stroke-width="1.3" stroke-linejoin="round" />
<path d="M594.1 764.6L601.7 773.6L601.9 763.1L597.3 757.7z" fill="#6e6d69" stroke="#151515" stroke-width="1.3" stroke-linejoin="round" /><path d="M601.7 773.6L610.4 767.5L607.8 759.0L601.9 763.1z" fill="#62615d" stroke="#151515" stroke-width="1.3" stroke-linejoin="round" /><path d="M597.3 757.7L601.9 763.1L607.8 759.0L603.2 753.6z" fill="#9a9283" stroke="#151515" stroke-width="1.3" stroke-linejoin="round" />
<path d="M428.5 588.1L436.2 597.1L436.3 586.6L431.7 581.2z" fill="#6e6d69" stroke="#151515" stroke-width="1.3" stroke-linejoin="round" /><path d="M436.2 597.1L444.8 591.0L442.2 582.5L436.3 586.6z" fill="#62615d" stroke="#151515" stroke-width="1.3" stroke-linejoin="round" /><path d="M431.7 581.2L436.3 586.6L442.2 582.5L437.6 577.1z" fill="#9a9283" stroke="#151515" stroke-width="1.3" stroke-linejoin="round" />
<path d="M437.0 598.2L444.7 607.2L444.9 596.7L440.3 591.3z" fill="#6e6d69" stroke="#151515" stroke-width="1.3" stroke-linejoin="round" /><path d="M444.7 607.2L453.3 601.1L450.8 592.5L444.9 596.7z" fill="#62615d" stroke="#151515" stroke-width="1.3" stroke-linejoin="round" /><path d="M440.3 591.3L444.9 596.7L450.8 592.5L446.2 587.1z" fill="#9a9283" stroke="#151515" stroke-width="1.3" stroke-linejoin="round" />
<path d="M445.6 608.2L453.2 617.2L453.4 606.7L448.8 601.3z" fill="#6e6d69" stroke="#151515" stroke-width="1.3" stroke-linejoin="round" /><path d="M453.2 617.2L461.9 611.1L459.3 602.5L453.4 606.7z" fill="#62615d" stroke="#151515" stroke-width="1.3" stroke-linejoin="round" /><path d="M448.8 601.3L453.4 606.7L459.3 602.5L454.7 597.1z" fill="#9a9283" stroke="#151515" stroke-width="1.3" stroke-linejoin="round" />
<path d="M454.1 618.2L461.8 627.2L462.0 616.7L457.4 611.3z" fill="#6e6d69" stroke="#151515" stroke-width="1.3" stroke-linejoin="round" /><path d="M461.8 627.2L470.4 621.1L467.8 612.6L462.0 616.7z" fill="#62615d" stroke="#151515" stroke-width="1.3" stroke-linejoin="round" /><path d="M457.4 611.3L462.0 616.7L467.8 612.6L463.2 607.2z" fill="#9a9283" stroke="#151515" stroke-width="1.3" stroke-linejoin="round" />
<path d="M462.7 628.3L470.3 637.3L470.5 626.7L465.9 621.3z" fill="#6e6d69" stroke="#151515" stroke-width="1.3" stroke-linejoin="round" /><path d="M470.3 637.3L479.0 631.2L476.4 622.6L470.5 626.7z" fill="#62615d" stroke="#151515" stroke-width="1.3" stroke-linejoin="round" /><path d="M465.9 621.3L470.5 626.7L476.4 622.6L471.8 617.2z" fill="#9a9283" stroke="#151515" stroke-width="1.3" stroke-linejoin="round" />
<path d="M471.2 638.3L478.9 647.3L479.1 636.8L474.5 631.4z" fill="#6e6d69" stroke="#151515" stroke-width="1.3" stroke-linejoin="round" /><path d="M478.9 647.3L487.5 641.2L484.9 632.6L479.1 636.8z" fill="#62615d" stroke="#151515" stroke-width="1.3" stroke-linejoin="round" /><path d="M474.5 631.4L479.1 636.8L484.9 632.6L480.3 627.2z" fill="#9a9283" stroke="#151515" stroke-width="1.3" stroke-linejoin="round" />
<path d="M479.8 648.3L487.4 657.3L487.6 646.8L483.0 641.4z" fill="#6e6d69" stroke="#151515" stroke-width="1.3" stroke-linejoin="round" /><path d="M487.4 657.3L496.1 651.2L493.5 642.7L487.6 646.8z" fill="#62615d" stroke="#151515" stroke-width="1.3" stroke-linejoin="round" /><path d="M483.0 641.4L487.6 646.8L493.5 642.7L488.9 637.2z" fill="#9a9283" stroke="#151515" stroke-width="1.3" stroke-linejoin="round" />
<path d="M488.3 658.4L496.0 667.4L496.2 656.8L491.6 651.4z" fill="#6e6d69" stroke="#151515" stroke-width="1.3" stroke-linejoin="round" /><path d="M496.0 667.4L504.6 661.3L502.0 652.7L496.2 656.8z" fill="#62615d" stroke="#151515" stroke-width="1.3" stroke-linejoin="round" /><path d="M491.6 651.4L496.2 656.8L502.0 652.7L497.4 647.3z" fill="#9a9283" stroke="#151515" stroke-width="1.3" stroke-linejoin="round" />
<path d="M496.8 668.4L504.5 677.4L504.7 666.9L500.1 661.5z" fill="#6e6d69" stroke="#151515" stroke-width="1.3" stroke-linejoin="round" /><path d="M504.5 677.4L513.1 671.3L510.6 662.7L504.7 666.9z" fill="#62615d" stroke="#151515" stroke-width="1.3" stroke-linejoin="round" /><path d="M500.1 661.5L504.7 666.9L510.6 662.7L506.0 657.3z" fill="#9a9283" stroke="#151515" stroke-width="1.3" stroke-linejoin="round" />
<path d="M505.4 678.4L513.1 687.4L513.3 676.9L508.6 671.5z" fill="#6e6d69" stroke="#151515" stroke-width="1.3" stroke-linejoin="round" /><path d="M513.1 687.4L521.7 681.3L519.1 672.7L513.3 676.9z" fill="#62615d" stroke="#151515" stroke-width="1.3" stroke-linejoin="round" /><path d="M508.6 671.5L513.3 676.9L519.1 672.7L514.5 667.3z" fill="#9a9283" stroke="#151515" stroke-width="1.3" stroke-linejoin="round" />
<path d="M513.9 688.4L521.6 697.5L521.8 686.9L517.2 681.5z" fill="#6e6d69" stroke="#151515" stroke-width="1.3" stroke-linejoin="round" /><path d="M521.6 697.5L530.2 691.3L527.7 682.8L521.8 686.9z" fill="#62615d" stroke="#151515" stroke-width="1.3" stroke-linejoin="round" /><path d="M517.2 681.5L521.8 686.9L527.7 682.8L523.1 677.4z" fill="#9a9283" stroke="#151515" stroke-width="1.3" stroke-linejoin="round" />
<path d="M522.5 698.5L530.2 707.5L530.3 697.0L525.7 691.6z" fill="#6e6d69" stroke="#151515" stroke-width="1.3" stroke-linejoin="round" /><path d="M530.2 707.5L538.8 701.4L536.2 692.8L530.3 697.0z" fill="#62615d" stroke="#151515" stroke-width="1.3" stroke-linejoin="round" /><path d="M525.7 691.6L530.3 697.0L536.2 692.8L531.6 687.4z" fill="#9a9283" stroke="#151515" stroke-width="1.3" stroke-linejoin="round" />
<path d="M533.3 711.2L541.0 720.2L541.2 709.7L536.6 704.2z" fill="#6e6d69" stroke="#151515" stroke-width="1.3" stroke-linejoin="round" /><path d="M541.0 720.2L549.6 714.1L547.0 705.5L541.2 709.7z" fill="#62615d" stroke="#151515" stroke-width="1.3" stroke-linejoin="round" /><path d="M536.6 704.2L541.2 709.7L547.0 705.5L542.4 700.1z" fill="#9a9283" stroke="#151515" stroke-width="1.3" stroke-linejoin="round" />
<path d="M541.8 721.2L549.5 730.2L549.7 719.7L545.1 714.3z" fill="#6e6d69" stroke="#151515" stroke-width="1.3" stroke-linejoin="round" /><path d="M549.5 730.2L558.1 724.1L555.6 715.5L549.7 719.7z" fill="#62615d" stroke="#151515" stroke-width="1.3" stroke-linejoin="round" /><path d="M545.1 714.3L549.7 719.7L555.6 715.5L551.0 710.1z" fill="#9a9283" stroke="#151515" stroke-width="1.3" stroke-linejoin="round" />
<path d="M550.4 731.2L558.1 740.2L558.2 729.7L553.6 724.3z" fill="#6e6d69" stroke="#151515" stroke-width="1.3" stroke-linejoin="round" /><path d="M558.1 740.2L566.7 734.1L564.1 725.6L558.2 729.7z" fill="#62615d" stroke="#151515" stroke-width="1.3" stroke-linejoin="round" /><path d="M553.6 724.3L558.2 729.7L564.1 725.6L559.5 720.2z" fill="#9a9283" stroke="#151515" stroke-width="1.3" stroke-linejoin="round" />
<path d="M558.9 741.3L566.6 750.3L566.8 739.7L562.2 734.3z" fill="#6e6d69" stroke="#151515" stroke-width="1.3" stroke-linejoin="round" /><path d="M566.6 750.3L575.2 744.2L572.7 735.6L566.8 739.7z" fill="#62615d" stroke="#151515" stroke-width="1.3" stroke-linejoin="round" /><path d="M562.2 734.3L566.8 739.7L572.7 735.6L568.1 730.2z" fill="#9a9283" stroke="#151515" stroke-width="1.3" stroke-linejoin="round" />
<path d="M567.5 751.3L575.1 760.3L575.3 749.8L570.7 744.4z" fill="#6e6d69" stroke="#151515" stroke-width="1.3" stroke-linejoin="round" /><path d="M575.1 760.3L583.8 754.2L581.2 745.6L575.3 749.8z" fill="#62615d" stroke="#151515" stroke-width="1.3" stroke-linejoin="round" /><path d="M570.7 744.4L575.3 749.8L581.2 745.6L576.6 740.2z" fill="#9a9283" stroke="#151515" stroke-width="1.3" stroke-linejoin="round" />
<path d="M576.0 761.3L583.7 770.3L583.9 759.8L579.3 754.4z" fill="#6e6d69" stroke="#151515" stroke-width="1.3" stroke-linejoin="round" /><path d="M583.7 770.3L592.3 764.2L589.8 755.6L583.9 759.8z" fill="#62615d" stroke="#151515" stroke-width="1.3" stroke-linejoin="round" /><path d="M579.3 754.4L583.9 759.8L589.8 755.6L585.1 750.2z" fill="#9a9283" stroke="#151515" stroke-width="1.3" stroke-linejoin="round" />
<path d="M584.6 771.3L592.2 780.4L592.4 769.8L587.8 764.4z" fill="#6e6d69" stroke="#151515" stroke-width="1.3" stroke-linejoin="round" /><path d="M592.2 780.4L600.9 774.2L598.3 765.7L592.4 769.8z" fill="#62615d" stroke="#151515" stroke-width="1.3" stroke-linejoin="round" /><path d="M587.8 764.4L592.4 769.8L598.3 765.7L593.7 760.3z" fill="#9a9283" stroke="#151515" stroke-width="1.3" stroke-linejoin="round" />
<path d="M414.8 590.0L422.5 599.0L422.7 588.4L418.1 583.0z" fill="#6e6d69" stroke="#151515" stroke-width="1.3" stroke-linejoin="round" /><path d="M422.5 599.0L431.1 592.8L428.5 584.3L422.7 588.4z" fill="#62615d" stroke="#151515" stroke-width="1.3" stroke-linejoin="round" /><path d="M418.1 583.0L422.7 588.4L428.5 584.3L423.9 578.9z" fill="#9a9283" stroke="#151515" stroke-width="1.3" stroke-linejoin="round" />
<path d="M423.3 600.0L431.0 609.0L431.2 598.5L426.6 593.1z" fill="#6e6d69" stroke="#151515" stroke-width="1.3" stroke-linejoin="round" /><path d="M431.0 609.0L439.6 602.9L437.1 594.3L431.2 598.5z" fill="#62615d" stroke="#151515" stroke-width="1.3" stroke-linejoin="round" /><path d="M426.6 593.1L431.2 598.5L437.1 594.3L432.5 588.9z" fill="#9a9283" stroke="#151515" stroke-width="1.3" stroke-linejoin="round" />
<path d="M431.9 610.0L439.6 619.0L439.8 608.5L435.2 603.1z" fill="#6e6d69" stroke="#151515" stroke-width="1.3" stroke-linejoin="round" /><path d="M439.6 619.0L448.2 612.9L445.6 604.3L439.8 608.5z" fill="#62615d" stroke="#151515" stroke-width="1.3" stroke-linejoin="round" /><path d="M435.2 603.1L439.8 608.5L445.6 604.3L441.0 598.9z" fill="#9a9283" stroke="#151515" stroke-width="1.3" stroke-linejoin="round" />
<path d="M440.4 620.0L448.1 629.0L448.3 618.5L443.7 613.1z" fill="#6e6d69" stroke="#151515" stroke-width="1.3" stroke-linejoin="round" /><path d="M448.1 629.0L456.7 622.9L454.2 614.4L448.3 618.5z" fill="#62615d" stroke="#151515" stroke-width="1.3" stroke-linejoin="round" /><path d="M443.7 613.1L448.3 618.5L454.2 614.4L449.6 609.0z" fill="#9a9283" stroke="#151515" stroke-width="1.3" stroke-linejoin="round" />
<path d="M449.0 630.1L456.7 639.1L456.8 628.6L452.2 623.2z" fill="#6e6d69" stroke="#151515" stroke-width="1.3" stroke-linejoin="round" /><path d="M456.7 639.1L465.3 633.0L462.7 624.4L456.8 628.6z" fill="#62615d" stroke="#151515" stroke-width="1.3" stroke-linejoin="round" /><path d="M452.2 623.2L456.8 628.6L462.7 624.4L458.1 619.0z" fill="#9a9283" stroke="#151515" stroke-width="1.3" stroke-linejoin="round" />
<path d="M457.5 640.1L465.2 649.1L465.4 638.6L460.8 633.2z" fill="#6e6d69" stroke="#151515" stroke-width="1.3" stroke-linejoin="round" /><path d="M465.2 649.1L473.8 643.0L471.3 634.4L465.4 638.6z" fill="#62615d" stroke="#151515" stroke-width="1.3" stroke-linejoin="round" /><path d="M460.8 633.2L465.4 638.6L471.3 634.4L466.7 629.0z" fill="#9a9283" stroke="#151515" stroke-width="1.3" stroke-linejoin="round" />
<path d="M466.1 650.1L473.7 659.1L473.9 648.6L469.3 643.2z" fill="#6e6d69" stroke="#151515" stroke-width="1.3" stroke-linejoin="round" /><path d="M473.7 659.1L482.4 653.0L479.8 644.5L473.9 648.6z" fill="#62615d" stroke="#151515" stroke-width="1.3" stroke-linejoin="round" /><path d="M469.3 643.2L473.9 648.6L479.8 644.5L475.2 639.1z" fill="#9a9283" stroke="#151515" stroke-width="1.3" stroke-linejoin="round" />
<path d="M474.6 660.2L482.3 669.2L482.5 658.6L477.9 653.2z" fill="#6e6d69" stroke="#151515" stroke-width="1.3" stroke-linejoin="round" /><path d="M482.3 669.2L490.9 663.1L488.4 654.5L482.5 658.6z" fill="#62615d" stroke="#151515" stroke-width="1.3" stroke-linejoin="round" /><path d="M477.9 653.2L482.5 658.6L488.4 654.5L483.7 649.1z" fill="#9a9283" stroke="#151515" stroke-width="1.3" stroke-linejoin="round" />
<path d="M483.2 670.2L490.8 679.2L491.0 668.7L486.4 663.3z" fill="#6e6d69" stroke="#151515" stroke-width="1.3" stroke-linejoin="round" /><path d="M490.8 679.2L499.5 673.1L496.9 664.5L491.0 668.7z" fill="#62615d" stroke="#151515" stroke-width="1.3" stroke-linejoin="round" /><path d="M486.4 663.3L491.0 668.7L496.9 664.5L492.3 659.1z" fill="#9a9283" stroke="#151515" stroke-width="1.3" stroke-linejoin="round" />
<path d="M491.7 680.2L499.4 689.2L499.6 678.7L495.0 673.3z" fill="#6e6d69" stroke="#151515" stroke-width="1.3" stroke-linejoin="round" /><path d="M499.4 689.2L508.0 683.1L505.4 674.6L499.6 678.7z" fill="#62615d" stroke="#151515" stroke-width="1.3" stroke-linejoin="round" /><path d="M495.0 673.3L499.6 678.7L505.4 674.6L500.8 669.1z" fill="#9a9283" stroke="#151515" stroke-width="1.3" stroke-linejoin="round" />
<path d="M500.3 690.3L507.9 699.3L508.1 688.7L503.5 683.3z" fill="#6e6d69" stroke="#151515" stroke-width="1.3" stroke-linejoin="round" /><path d="M507.9 699.3L516.6 693.2L514.0 684.6L508.1 688.7z" fill="#62615d" stroke="#151515" stroke-width="1.3" stroke-linejoin="round" /><path d="M503.5 683.3L508.1 688.7L514.0 684.6L509.4 679.2z" fill="#9a9283" stroke="#151515" stroke-width="1.3" stroke-linejoin="round" />
<path d="M508.8 700.3L516.5 709.3L516.7 698.8L512.1 693.4z" fill="#6e6d69" stroke="#151515" stroke-width="1.3" stroke-linejoin="round" /><path d="M516.5 709.3L525.1 703.2L522.5 694.6L516.7 698.8z" fill="#62615d" stroke="#151515" stroke-width="1.3" stroke-linejoin="round" /><path d="M512.1 693.4L516.7 698.8L522.5 694.6L517.9 689.2z" fill="#9a9283" stroke="#151515" stroke-width="1.3" stroke-linejoin="round" />
<path d="M517.3 710.3L525.0 719.3L525.2 708.8L520.6 703.4z" fill="#6e6d69" stroke="#151515" stroke-width="1.3" stroke-linejoin="round" /><path d="M525.0 719.3L533.7 713.2L531.1 704.6L525.2 708.8z" fill="#62615d" stroke="#151515" stroke-width="1.3" stroke-linejoin="round" /><path d="M520.6 703.4L525.2 708.8L531.1 704.6L526.5 699.2z" fill="#9a9283" stroke="#151515" stroke-width="1.3" stroke-linejoin="round" />
<path d="M523.8 717.9L531.5 726.9L531.7 716.4L527.1 711.0z" fill="#6e6d69" stroke="#151515" stroke-width="1.3" stroke-linejoin="round" /><path d="M531.5 726.9L540.1 720.8L537.5 712.2L531.7 716.4z" fill="#62615d" stroke="#151515" stroke-width="1.3" stroke-linejoin="round" /><path d="M527.1 711.0L531.7 716.4L537.5 712.2L532.9 706.8z" fill="#9a9283" stroke="#151515" stroke-width="1.3" stroke-linejoin="round" />
<path d="M532.3 727.9L540.0 736.9L540.2 726.4L535.6 721.0z" fill="#6e6d69" stroke="#151515" stroke-width="1.3" stroke-linejoin="round" /><path d="M540.0 736.9L548.6 730.8L546.1 722.2L540.2 726.4z" fill="#62615d" stroke="#151515" stroke-width="1.3" stroke-linejoin="round" /><path d="M535.6 721.0L540.2 726.4L546.1 722.2L541.5 716.8z" fill="#9a9283" stroke="#151515" stroke-width="1.3" stroke-linejoin="round" />
<path d="M540.9 737.9L548.6 747.0L548.8 736.4L544.2 731.0z" fill="#6e6d69" stroke="#151515" stroke-width="1.3" stroke-linejoin="round" /><path d="M548.6 747.0L557.2 740.8L554.6 732.3L548.8 736.4z" fill="#62615d" stroke="#151515" stroke-width="1.3" stroke-linejoin="round" /><path d="M544.2 731.0L548.8 736.4L554.6 732.3L550.0 726.9z" fill="#9a9283" stroke="#151515" stroke-width="1.3" stroke-linejoin="round" />
<path d="M549.4 748.0L557.1 757.0L557.3 746.5L552.7 741.1z" fill="#6e6d69" stroke="#151515" stroke-width="1.3" stroke-linejoin="round" /><path d="M557.1 757.0L565.7 750.9L563.2 742.3L557.3 746.5z" fill="#62615d" stroke="#151515" stroke-width="1.3" stroke-linejoin="round" /><path d="M552.7 741.1L557.3 746.5L563.2 742.3L558.6 736.9z" fill="#9a9283" stroke="#151515" stroke-width="1.3" stroke-linejoin="round" />
<path d="M558.0 758.0L565.7 767.0L565.8 756.5L561.2 751.1z" fill="#6e6d69" stroke="#151515" stroke-width="1.3" stroke-linejoin="round" /><path d="M565.7 767.0L574.3 760.9L571.7 752.3L565.8 756.5z" fill="#62615d" stroke="#151515" stroke-width="1.3" stroke-linejoin="round" /><path d="M561.2 751.1L565.8 756.5L571.7 752.3L567.1 746.9z" fill="#9a9283" stroke="#151515" stroke-width="1.3" stroke-linejoin="round" />
<path d="M566.5 768.0L574.2 777.0L574.4 766.5L569.8 761.1z" fill="#6e6d69" stroke="#151515" stroke-width="1.3" stroke-linejoin="round" /><path d="M574.2 777.0L582.8 770.9L580.3 762.4L574.4 766.5z" fill="#62615d" stroke="#151515" stroke-width="1.3" stroke-linejoin="round" /><path d="M569.8 761.1L574.4 766.5L580.3 762.4L575.7 757.0z" fill="#9a9283" stroke="#151515" stroke-width="1.3" stroke-linejoin="round" />
<path d="M575.1 778.1L582.7 787.1L582.9 776.6L578.3 771.1z" fill="#6e6d69" stroke="#151515" stroke-width="1.3" stroke-linejoin="round" /><path d="M582.7 787.1L591.4 781.0L588.8 772.4L582.9 776.6z" fill="#62615d" stroke="#151515" stroke-width="1.3" stroke-linejoin="round" /><path d="M578.3 771.1L582.9 776.6L588.8 772.4L584.2 767.0z" fill="#9a9283" stroke="#151515" stroke-width="1.3" stroke-linejoin="round" />
<path d="M407.4 599.1L415.1 608.1L415.3 597.6L410.7 592.2z" fill="#6e6d69" stroke="#151515" stroke-width="1.3" stroke-linejoin="round" /><path d="M415.1 608.1L423.7 602.0L421.1 593.5L415.3 597.6z" fill="#62615d" stroke="#151515" stroke-width="1.3" stroke-linejoin="round" /><path d="M410.7 592.2L415.3 597.6L421.1 593.5L416.5 588.1z" fill="#9a9283" stroke="#151515" stroke-width="1.3" stroke-linejoin="round" />
<path d="M415.9 609.2L423.6 618.2L423.8 607.6L419.2 602.2z" fill="#6e6d69" stroke="#151515" stroke-width="1.3" stroke-linejoin="round" /><path d="M423.6 618.2L432.2 612.1L429.7 603.5L423.8 607.6z" fill="#62615d" stroke="#151515" stroke-width="1.3" stroke-linejoin="round" /><path d="M419.2 602.2L423.8 607.6L429.7 603.5L425.1 598.1z" fill="#9a9283" stroke="#151515" stroke-width="1.3" stroke-linejoin="round" />
<path d="M424.5 619.2L432.2 628.2L432.4 617.7L427.8 612.3z" fill="#6e6d69" stroke="#151515" stroke-width="1.3" stroke-linejoin="round" /><path d="M432.2 628.2L440.8 622.1L438.2 613.5L432.4 617.7z" fill="#62615d" stroke="#151515" stroke-width="1.3" stroke-linejoin="round" /><path d="M427.8 612.3L432.4 617.7L438.2 613.5L433.6 608.1z" fill="#9a9283" stroke="#151515" stroke-width="1.3" stroke-linejoin="round" />
<path d="M433.0 629.2L440.7 638.2L440.9 627.7L436.3 622.3z" fill="#6e6d69" stroke="#151515" stroke-width="1.3" stroke-linejoin="round" /><path d="M440.7 638.2L449.3 632.1L446.8 623.5L440.9 627.7z" fill="#62615d" stroke="#151515" stroke-width="1.3" stroke-linejoin="round" /><path d="M436.3 622.3L440.9 627.7L446.8 623.5L442.2 618.1z" fill="#9a9283" stroke="#151515" stroke-width="1.3" stroke-linejoin="round" />
<path d="M441.6 639.2L449.3 648.3L449.4 637.7L444.8 632.3z" fill="#6e6d69" stroke="#151515" stroke-width="1.3" stroke-linejoin="round" /><path d="M449.3 648.3L457.9 642.1L455.3 633.6L449.4 637.7z" fill="#62615d" stroke="#151515" stroke-width="1.3" stroke-linejoin="round" /><path d="M444.8 632.3L449.4 637.7L455.3 633.6L450.7 628.2z" fill="#9a9283" stroke="#151515" stroke-width="1.3" stroke-linejoin="round" />
<path d="M450.1 649.3L457.8 658.3L458.0 647.8L453.4 642.4z" fill="#6e6d69" stroke="#151515" stroke-width="1.3" stroke-linejoin="round" /><path d="M457.8 658.3L466.4 652.2L463.9 643.6L458.0 647.8z" fill="#62615d" stroke="#151515" stroke-width="1.3" stroke-linejoin="round" /><path d="M453.4 642.4L458.0 647.8L463.9 643.6L459.3 638.2z" fill="#9a9283" stroke="#151515" stroke-width="1.3" stroke-linejoin="round" />
<path d="M458.7 659.3L466.3 668.3L466.5 657.8L461.9 652.4z" fill="#6e6d69" stroke="#151515" stroke-width="1.3" stroke-linejoin="round" /><path d="M466.3 668.3L475.0 662.2L472.4 653.6L466.5 657.8z" fill="#62615d" stroke="#151515" stroke-width="1.3" stroke-linejoin="round" /><path d="M461.9 652.4L466.5 657.8L472.4 653.6L467.8 648.2z" fill="#9a9283" stroke="#151515" stroke-width="1.3" stroke-linejoin="round" />
<path d="M467.2 669.3L474.9 678.3L475.1 667.8L470.5 662.4z" fill="#6e6d69" stroke="#151515" stroke-width="1.3" stroke-linejoin="round" /><path d="M474.9 678.3L483.5 672.2L481.0 663.7L475.1 667.8z" fill="#62615d" stroke="#151515" stroke-width="1.3" stroke-linejoin="round" /><path d="M470.5 662.4L475.1 667.8L481.0 663.7L476.3 658.3z" fill="#9a9283" stroke="#151515" stroke-width="1.3" stroke-linejoin="round" />
<path d="M475.8 679.4L483.4 688.4L483.6 677.9L479.0 672.5z" fill="#6e6d69" stroke="#151515" stroke-width="1.3" stroke-linejoin="round" /><path d="M483.4 688.4L492.1 682.3L489.5 673.7L483.6 677.9z" fill="#62615d" stroke="#151515" stroke-width="1.3" stroke-linejoin="round" /><path d="M479.0 672.5L483.6 677.9L489.5 673.7L484.9 668.3z" fill="#9a9283" stroke="#151515" stroke-width="1.3" stroke-linejoin="round" />
<path d="M484.3 689.4L492.0 698.4L492.2 687.9L487.6 682.5z" fill="#6e6d69" stroke="#151515" stroke-width="1.3" stroke-linejoin="round" /><path d="M492.0 698.4L500.6 692.3L498.0 683.7L492.2 687.9z" fill="#62615d" stroke="#151515" stroke-width="1.3" stroke-linejoin="round" /><path d="M487.6 682.5L492.2 687.9L498.0 683.7L493.4 678.3z" fill="#9a9283" stroke="#151515" stroke-width="1.3" stroke-linejoin="round" />
<path d="M492.9 699.4L500.5 708.4L500.7 697.9L496.1 692.5z" fill="#6e6d69" stroke="#151515" stroke-width="1.3" stroke-linejoin="round" /><path d="M500.5 708.4L509.2 702.3L506.6 693.8L500.7 697.9z" fill="#62615d" stroke="#151515" stroke-width="1.3" stroke-linejoin="round" /><path d="M496.1 692.5L500.7 697.9L506.6 693.8L502.0 688.4z" fill="#9a9283" stroke="#151515" stroke-width="1.3" stroke-linejoin="round" />
<path d="M501.4 709.5L509.1 718.5L509.3 707.9L504.7 702.5z" fill="#6e6d69" stroke="#151515" stroke-width="1.3" stroke-linejoin="round" /><path d="M509.1 718.5L517.7 712.4L515.1 703.8L509.3 707.9z" fill="#62615d" stroke="#151515" stroke-width="1.3" stroke-linejoin="round" /><path d="M504.7 702.5L509.3 707.9L515.1 703.8L510.5 698.4z" fill="#9a9283" stroke="#151515" stroke-width="1.3" stroke-linejoin="round" />
<path d="M514.3 724.6L522.0 733.6L522.2 723.1L517.6 717.7z" fill="#6e6d69" stroke="#151515" stroke-width="1.3" stroke-linejoin="round" /><path d="M522.0 733.6L530.6 727.5L528.0 718.9L522.2 723.1z" fill="#62615d" stroke="#151515" stroke-width="1.3" stroke-linejoin="round" /><path d="M517.6 717.7L522.2 723.1L528.0 718.9L523.4 713.5z" fill="#9a9283" stroke="#151515" stroke-width="1.3" stroke-linejoin="round" />
<path d="M522.9 734.6L530.5 743.6L530.7 733.1L526.1 727.7z" fill="#6e6d69" stroke="#151515" stroke-width="1.3" stroke-linejoin="round" /><path d="M530.5 743.6L539.2 737.5L536.6 729.0L530.7 733.1z" fill="#62615d" stroke="#151515" stroke-width="1.3" stroke-linejoin="round" /><path d="M526.1 727.7L530.7 733.1L536.6 729.0L532.0 723.6z" fill="#9a9283" stroke="#151515" stroke-width="1.3" stroke-linejoin="round" />
<path d="M531.4 744.7L539.1 753.7L539.3 743.2L534.7 737.7z" fill="#6e6d69" stroke="#151515" stroke-width="1.3" stroke-linejoin="round" /><path d="M539.1 753.7L547.7 747.6L545.1 739.0L539.3 743.2z" fill="#62615d" stroke="#151515" stroke-width="1.3" stroke-linejoin="round" /><path d="M534.7 737.7L539.3 743.2L545.1 739.0L540.5 733.6z" fill="#9a9283" stroke="#151515" stroke-width="1.3" stroke-linejoin="round" />
<path d="M539.9 754.7L547.6 763.7L547.8 753.2L543.2 747.8z" fill="#6e6d69" stroke="#151515" stroke-width="1.3" stroke-linejoin="round" /><path d="M547.6 763.7L556.2 757.6L553.7 749.0L547.8 753.2z" fill="#62615d" stroke="#151515" stroke-width="1.3" stroke-linejoin="round" /><path d="M543.2 747.8L547.8 753.2L553.7 749.0L549.1 743.6z" fill="#9a9283" stroke="#151515" stroke-width="1.3" stroke-linejoin="round" />
<path d="M548.5 764.7L556.2 773.7L556.4 763.2L551.7 757.8z" fill="#6e6d69" stroke="#151515" stroke-width="1.3" stroke-linejoin="round" /><path d="M556.2 773.7L564.8 767.6L562.2 759.1L556.4 763.2z" fill="#62615d" stroke="#151515" stroke-width="1.3" stroke-linejoin="round" /><path d="M551.7 757.8L556.4 763.2L562.2 759.1L557.6 753.7z" fill="#9a9283" stroke="#151515" stroke-width="1.3" stroke-linejoin="round" />
<path d="M557.0 774.8L564.7 783.8L564.9 773.2L560.3 767.8z" fill="#6e6d69" stroke="#151515" stroke-width="1.3" stroke-linejoin="round" /><path d="M564.7 783.8L573.3 777.7L570.8 769.1L564.9 773.2z" fill="#62615d" stroke="#151515" stroke-width="1.3" stroke-linejoin="round" /><path d="M560.3 767.8L564.9 773.2L570.8 769.1L566.2 763.7z" fill="#9a9283" stroke="#151515" stroke-width="1.3" stroke-linejoin="round" />
<path d="M565.6 784.8L573.3 793.8L573.4 783.3L568.8 777.9z" fill="#6e6d69" stroke="#151515" stroke-width="1.3" stroke-linejoin="round" /><path d="M573.3 793.8L581.9 787.7L579.3 779.1L573.4 783.3z" fill="#62615d" stroke="#151515" stroke-width="1.3" stroke-linejoin="round" /><path d="M568.8 777.9L573.4 783.3L579.3 779.1L574.7 773.7z" fill="#9a9283" stroke="#151515" stroke-width="1.3" stroke-linejoin="round" />
<path d="M398.3 609.5L405.9 618.5L406.5 607.8L401.9 602.4z" fill="#6e6d69" stroke="#151515" stroke-width="1.3" stroke-linejoin="round" /><path d="M405.9 618.5L416.3 611.2L413.5 602.8L406.5 607.8z" fill="#62615d" stroke="#151515" stroke-width="1.3" stroke-linejoin="round" /><path d="M401.9 602.4L406.5 607.8L413.5 602.8L408.9 597.4z" fill="#9a9283" stroke="#151515" stroke-width="1.3" stroke-linejoin="round" />
<path d="M406.8 619.6L414.5 628.6L415.0 617.8L410.4 612.4z" fill="#6e6d69" stroke="#151515" stroke-width="1.3" stroke-linejoin="round" /><path d="M414.5 628.6L424.8 621.2L422.1 612.8L415.0 617.8z" fill="#62615d" stroke="#151515" stroke-width="1.3" stroke-linejoin="round" /><path d="M410.4 612.4L415.0 617.8L422.1 612.8L417.5 607.4z" fill="#9a9283" stroke="#151515" stroke-width="1.3" stroke-linejoin="round" />
<path d="M415.4 629.6L423.0 638.6L423.6 627.8L419.0 622.4z" fill="#6e6d69" stroke="#151515" stroke-width="1.3" stroke-linejoin="round" /><path d="M423.0 638.6L433.4 631.3L430.6 622.8L423.6 627.8z" fill="#62615d" stroke="#151515" stroke-width="1.3" stroke-linejoin="round" /><path d="M419.0 622.4L423.6 627.8L430.6 622.8L426.0 617.4z" fill="#9a9283" stroke="#151515" stroke-width="1.3" stroke-linejoin="round" />
<path d="M423.9 639.6L471.0 694.9L471.3 683.9L427.7 632.7z" fill="#6e6d69" stroke="#151515" stroke-width="1.3" stroke-linejoin="round" /><path d="M471.0 694.9L481.4 687.6L478.4 678.9L471.3 683.9z" fill="#62615d" stroke="#151515" stroke-width="1.3" stroke-linejoin="round" /><path d="M427.7 632.7L471.3 683.9L478.4 678.9L434.8 627.7z" fill="#9a9283" stroke="#151515" stroke-width="1.3" stroke-linejoin="round" />
<path d="M471.9 695.9L519.0 751.2L519.3 740.2L475.7 689.0z" fill="#6e6d69" stroke="#151515" stroke-width="1.3" stroke-linejoin="round" /><path d="M519.0 751.2L529.3 743.8L526.3 735.2L519.3 740.2z" fill="#62615d" stroke="#151515" stroke-width="1.3" stroke-linejoin="round" /><path d="M475.7 689.0L519.3 740.2L526.3 735.2L482.7 684.0z" fill="#9a9283" stroke="#151515" stroke-width="1.3" stroke-linejoin="round" />
<path d="M503.1 732.6L510.8 741.6L511.3 730.8L506.7 725.4z" fill="#6e6d69" stroke="#151515" stroke-width="1.3" stroke-linejoin="round" /><path d="M510.8 741.6L521.1 734.2L518.3 725.8L511.3 730.8z" fill="#62615d" stroke="#151515" stroke-width="1.3" stroke-linejoin="round" /><path d="M506.7 725.4L511.3 730.8L518.3 725.8L513.7 720.4z" fill="#9a9283" stroke="#151515" stroke-width="1.3" stroke-linejoin="round" />
<path d="M511.6 742.6L519.3 751.6L519.8 740.8L515.2 735.4z" fill="#6e6d69" stroke="#151515" stroke-width="1.3" stroke-linejoin="round" /><path d="M519.3 751.6L529.7 744.3L526.9 735.8L519.8 740.8z" fill="#62615d" stroke="#151515" stroke-width="1.3" stroke-linejoin="round" /><path d="M515.2 735.4L519.8 740.8L526.9 735.8L522.3 730.4z" fill="#9a9283" stroke="#151515" stroke-width="1.3" stroke-linejoin="round" />
<path d="M520.2 752.6L527.9 761.6L528.4 750.9L523.8 745.4z" fill="#6e6d69" stroke="#151515" stroke-width="1.3" stroke-linejoin="round" /><path d="M527.9 761.6L538.2 754.3L535.4 745.9L528.4 750.9z" fill="#62615d" stroke="#151515" stroke-width="1.3" stroke-linejoin="round" /><path d="M523.8 745.4L528.4 750.9L535.4 745.9L530.8 740.5z" fill="#9a9283" stroke="#151515" stroke-width="1.3" stroke-linejoin="round" />
<path d="M528.7 762.6L536.4 771.7L536.9 760.9L532.3 755.5z" fill="#6e6d69" stroke="#151515" stroke-width="1.3" stroke-linejoin="round" /><path d="M536.4 771.7L546.8 764.3L544.0 755.9L536.9 760.9z" fill="#62615d" stroke="#151515" stroke-width="1.3" stroke-linejoin="round" /><path d="M532.3 755.5L536.9 760.9L544.0 755.9L539.4 750.5z" fill="#9a9283" stroke="#151515" stroke-width="1.3" stroke-linejoin="round" />
<path d="M537.3 772.7L544.9 781.7L545.5 770.9L540.9 765.5z" fill="#6e6d69" stroke="#151515" stroke-width="1.3" stroke-linejoin="round" /><path d="M544.9 781.7L555.3 774.3L552.5 765.9L545.5 770.9z" fill="#62615d" stroke="#151515" stroke-width="1.3" stroke-linejoin="round" /><path d="M540.9 765.5L545.5 770.9L552.5 765.9L547.9 760.5z" fill="#9a9283" stroke="#151515" stroke-width="1.3" stroke-linejoin="round" />
<path d="M545.8 782.7L553.5 791.7L554.0 780.9L549.4 775.5z" fill="#6e6d69" stroke="#151515" stroke-width="1.3" stroke-linejoin="round" /><path d="M553.5 791.7L563.8 784.4L561.1 776.0L554.0 780.9z" fill="#62615d" stroke="#151515" stroke-width="1.3" stroke-linejoin="round" /><path d="M549.4 775.5L554.0 780.9L561.1 776.0L556.5 770.6z" fill="#9a9283" stroke="#151515" stroke-width="1.3" stroke-linejoin="round" />
<path d="M554.4 792.7L562.0 801.7L562.6 791.0L558.0 785.6z" fill="#6e6d69" stroke="#151515" stroke-width="1.3" stroke-linejoin="round" /><path d="M562.0 801.7L572.4 794.4L569.6 786.0L562.6 791.0z" fill="#62615d" stroke="#151515" stroke-width="1.3" stroke-linejoin="round" /><path d="M558.0 785.6L562.6 791.0L569.6 786.0L565.0 780.6z" fill="#9a9283" stroke="#151515" stroke-width="1.3" stroke-linejoin="round" />
<path d="M565.3 506.0L754.0 706.3L874.2 617.7L874.2 623.0L754.0 712.0L565.3 511.0z" fill="#514e49" stroke="#151515" stroke-width="1.1" stroke-linejoin="round" />
<path d="M565.3 506.0L678.8 429.0L874.2 617.7L754.0 706.3zM598.7 489.3L647.4 458.5L787.4 603.6L777.1 610.0L760.4 593.3L750.2 599.8L768.1 617.7L732.2 642.1L712.2 626.7L723.2 619.0L706.5 601.0L695.0 608.7L602.5 514.5L614.1 507.8zM732.2 647.3L792.5 606.2L825.9 639.6L765.6 682.0zM674.4 468.8L682.1 464.9L734.8 516.3L724.5 522.7zM729.6 522.7L738.6 518.9L790.0 570.2L781.0 576.7zM657.7 453.4L668.0 449.5L677.8 459.8L668.0 467.5zM782.3 577.9L792.5 574.1L810.5 589.5L799.0 597.2z" fill="#000" fill-rule="evenodd" opacity="0.13" filter="url(#bl5)" transform="translate(9 7)"/>
<path d="M565.3 506.0L678.8 429.0L874.2 617.7L754.0 706.3zM598.7 489.3L647.4 458.5L787.4 603.6L777.1 610.0L760.4 593.3L750.2 599.8L768.1 617.7L732.2 642.1L712.2 626.7L723.2 619.0L706.5 601.0L695.0 608.7L602.5 514.5L614.1 507.8zM732.2 647.3L792.5 606.2L825.9 639.6L765.6 682.0zM674.4 468.8L682.1 464.9L734.8 516.3L724.5 522.7zM729.6 522.7L738.6 518.9L790.0 570.2L781.0 576.7zM657.7 453.4L668.0 449.5L677.8 459.8L668.0 467.5zM782.3 577.9L792.5 574.1L810.5 589.5L799.0 597.2z" fill="#999284" fill-rule="evenodd" stroke="#151515" stroke-width="1.1" stroke-linejoin="round"/>
<path d="M598.7 489.3L647.4 458.5L647.4 462.5L598.7 493.3z" fill="#4b4843" stroke="#151515" stroke-width="0.6" stroke-linejoin="round" />
<path d="M732.2 647.3L792.5 606.2L792.5 610.2L732.2 651.3z" fill="#4b4843" stroke="#151515" stroke-width="0.6" stroke-linejoin="round" />
<path d="M674.4 468.8L682.1 464.9L682.1 468.9L674.4 472.8z" fill="#4b4843" stroke="#151515" stroke-width="0.6" stroke-linejoin="round" />
<path d="M729.6 522.7L738.6 518.9L738.6 522.9L729.6 526.7z" fill="#4b4843" stroke="#151515" stroke-width="0.6" stroke-linejoin="round" />
<path d="M657.7 453.4L668.0 449.5L668.0 453.5L657.7 457.4z" fill="#4b4843" stroke="#151515" stroke-width="0.6" stroke-linejoin="round" />
<path d="M782.3 577.9L792.5 574.1L792.5 578.1L782.3 581.9z" fill="#4b4843" stroke="#151515" stroke-width="0.6" stroke-linejoin="round" />
<path d="M665.0 439.0L857.0 628.0" fill="none" stroke="#1a1a1a" stroke-width="1.1" />
<path d="M668.0 437.0L860.0 626.0" fill="none" stroke="#b0a89b" stroke-width="1.0" />
<path d="M571.0 506.0L756.0 700.0L866.0 619.0" fill="none" stroke="#1a1a1a" stroke-width="0.9" />
<path d="M566.0 511.0L754.0 712.0L874.0 623.0" fill="none" stroke="#151515" stroke-width="0.9" />
<path d="M1218.0 558.0L1428.0 724.0L1423.0 760.0L1216.0 585.0z" fill="#000" opacity="0.16" filter="url(#bl10)"/>
<path d="M1226.6 542.8L1435.8 716.4L1431.0 754.1L1241.6 591.3L1224.3 576.3z" fill="url(#gBar)" stroke="#151515" stroke-width="1.1" stroke-linejoin="round" />
<path d="M1241.6 534.7L1450.1 707.4L1435.8 716.4L1226.6 542.8z" fill="#7d776d" stroke="#151515" stroke-width="1.1" stroke-linejoin="round" />
<path d="M1435.8 716.4L1450.1 707.4L1446.0 730.7L1430.4 746.3z" fill="#55524c" stroke="#151515" stroke-width="0.9" stroke-linejoin="round" />
<path d="M1450.1 707.4L1462.7 720.0L1446.0 730.7z" fill="#7a756b" stroke="#151515" stroke-width="0.8" stroke-linejoin="round" />
<path d="M1430.4 746.3L1446.0 730.7L1462.7 720.0L1465.7 729.5L1431.0 754.1z" fill="#67635c" stroke="#151515" stroke-width="0.8" stroke-linejoin="round" />
<path d="M1431.0 750.0L1465.0 730.0" fill="none" stroke="#151515" stroke-width="0.7" />
<path d="M1254.0 537.0L1262.0 540.0L1262.0 557.0L1254.0 553.0z" fill="#5a5751" stroke="#151515" stroke-width="0.8" stroke-linejoin="round" />
<path d="M1221.0 568.0L1231.0 570.0L1231.0 582.0L1222.0 579.0z" fill="#5a5751" stroke="#151515" stroke-width="0.8" stroke-linejoin="round" />
<circle cx="1236" cy="560" r="1.4" fill="#1c1b19"/>
<circle cx="1300" cy="614" r="1.4" fill="#1c1b19"/>
<circle cx="1323" cy="637" r="1.4" fill="#1c1b19"/>
<circle cx="1319" cy="652" r="1.4" fill="#1c1b19"/>
<circle cx="1355" cy="664" r="1.4" fill="#1c1b19"/>
<circle cx="1382" cy="687" r="1.4" fill="#1c1b19"/>
<circle cx="1415" cy="714" r="1.4" fill="#1c1b19"/>
<circle cx="1414" cy="733" r="1.4" fill="#1c1b19"/>
<path d="M1111.0 598.0L1333.0 793.0L1330.0 835.0L1110.0 622.0z" fill="#000" opacity="0.16" filter="url(#bl10)"/>
<path d="M1119.9 586.6L1341.0 780.0L1338.7 827.5L1204.3 696.8L1204.3 696.8L1118.4 613.3z" fill="url(#gFace)" stroke="#151515" stroke-width="1.1" stroke-linejoin="round" />
<path d="M1210.2 672.9L1269.8 726.3L1269.1 741.8L1209.5 686.3z" fill="#fbfbfb" stroke="#151515" stroke-width="1.0" stroke-linejoin="round" />
<path d="M1210.2 672.9L1269.8 726.3L1269.7 729.1L1210.1 675.4z" fill="#4a4743" stroke="#151515" stroke-width="0.6" stroke-linejoin="round" />
<path d="M1278.7 734.2L1335.0 784.6L1334.2 802.4L1277.9 750.0z" fill="#fbfbfb" stroke="#151515" stroke-width="1.0" stroke-linejoin="round" />
<path d="M1278.7 734.2L1335.0 784.6L1334.9 787.8L1278.5 737.1z" fill="#4a4743" stroke="#151515" stroke-width="0.6" stroke-linejoin="round" />
<path d="M1205.8 669.0L1205.1 682.2" fill="none" stroke="#151515" stroke-width="0.8" />
<path d="M1210.2 672.9L1209.5 686.3" fill="none" stroke="#151515" stroke-width="0.8" />
<path d="M1269.8 726.3L1269.1 741.8" fill="none" stroke="#151515" stroke-width="0.8" />
<path d="M1278.7 734.2L1277.9 750.0" fill="none" stroke="#151515" stroke-width="0.8" />
<path d="M1205.1 682.2L1339.7 807.5L1339.5 811.4L1204.9 685.0z" fill="#77726a" stroke="#151515" stroke-width="0.8" stroke-linejoin="round" />
<path d="M1204.7 689.9L1339.2 818.0" fill="none" stroke="#2a2926" stroke-width="0.8" />
<path d="M1205.1 682.2L1204.3 696.8" fill="none" stroke="#151515" stroke-width="0.9" />
<path d="M1133.0 577.5L1357.5 775.0L1341.0 780.0L1119.9 586.6z" fill="#8a8479" stroke="#151515" stroke-width="1.1" stroke-linejoin="round" />
<path d="M1341.0 780.0L1357.5 775.0L1350.7 819.8L1338.7 827.5z" fill="#5a5650" stroke="#151515" stroke-width="0.9" stroke-linejoin="round" />
<path d="M1190.0 621.0L1265.0 681.0L1263.0 690.0L1190.0 634.0z" fill="#000" opacity="0.15" filter="url(#bl5)"/>
<path d="M1200.5 613.0L1204.0 609.0L1271.0 666.0L1270.0 677.0L1266.0 679.0L1200.5 624.0z" fill="#3b3936" stroke="#151515" stroke-width="0.9" stroke-linejoin="round" />
<path d="M1200.5 613.0L1204.0 609.0L1271.0 666.0L1266.0 670.0z" fill="#77726a" stroke="#151515" stroke-width="0.6" stroke-linejoin="round" />
<path d="M1187.5 600.0L1196.0 594.0L1209.5 604.0L1209.5 612.0L1201.0 617.0L1187.5 607.0z" fill="#5a5751" stroke="#151515" stroke-width="0.9" stroke-linejoin="round" />
<path d="M1187.5 600.0L1196.0 594.0L1209.5 604.0L1201.0 609.0z" fill="#7d776d" stroke="#151515" stroke-width="0.8" stroke-linejoin="round" />
<circle cx="1272" cy="673" r="2" fill="#444" stroke="#111" stroke-width="0.8"/>
<path d="M1116.5 620.0L1124.0 616.0L1142.0 631.0L1142.0 641.0L1134.0 645.0L1116.5 630.0z" fill="#56534d" stroke="#151515" stroke-width="0.9" stroke-linejoin="round" />
<path d="M1116.5 620.0L1124.0 616.0L1142.0 631.0L1134.0 635.0z" fill="#77726a" stroke="#151515" stroke-width="0.7" stroke-linejoin="round" />
<path d="M1136.0 643.0L1143.0 639.0L1155.0 649.0L1155.0 655.0L1148.0 659.0L1136.0 650.0z" fill="#56534d" stroke="#151515" stroke-width="0.9" stroke-linejoin="round" />
<path d="M1025.7 663.0L1030.0 661.0L1052.0 678.0L1056.0 684.0L1250.0 873.0L1247.0 877.0L1052.0 688.0L1027.0 672.0z" fill="#55524c" stroke="#151515" stroke-width="1.0" stroke-linejoin="round" />
<path d="M1129.3 722.4L1192.2 769.9L1185.8 799.5L1127.3 748.1z" fill="#000" opacity="0.14" filter="url(#bl7)"/>
<path d="M1135.3 715.4L1198.2 762.9L1191.8 792.5L1133.3 741.1z" fill="#5d5953" stroke="#151515" stroke-width="1.1" stroke-linejoin="round" />
<path d="M1135.3 715.4L1198.2 762.9L1197.6 765.9L1135.1 718.0z" fill="#8a8479" stroke="#151515" stroke-width="0.7" stroke-linejoin="round" />
<path d="M1198.2 762.9L1200.2 765.9L1193.3 790.5L1191.8 792.5L1197.6 765.9z" fill="#4e4b46" stroke="#151515" stroke-width="0.7" stroke-linejoin="round" />
<path d="M1138.2 728.6L1185.7 774.8L1185.2 777.2L1138.0 730.7z" fill="#77726a" stroke="#151515" stroke-width="0.7" stroke-linejoin="round" />
<path d="M1150.8 740.3L1170.5 759.3L1169.0 768.6L1149.8 749.1z" fill="#8f8a81" stroke="#151515" stroke-width="0.8" stroke-linejoin="round" />
<path d="M1153.4 752.1L1166.1 765.2L1165.6 768.5L1153.0 755.4z" fill="#77726a" stroke="#151515" stroke-width="0.7" stroke-linejoin="round" />
<path d="M1188.4 776.4L1251.9 823.9L1248.7 853.4L1185.8 799.5z" fill="#000" opacity="0.14" filter="url(#bl7)"/>
<path d="M1194.4 769.4L1257.9 816.9L1254.7 846.4L1191.8 792.5z" fill="#5d5953" stroke="#151515" stroke-width="1.1" stroke-linejoin="round" />
<path d="M1194.4 769.4L1257.9 816.9L1257.6 819.9L1194.1 771.7z" fill="#8a8479" stroke="#151515" stroke-width="0.7" stroke-linejoin="round" />
<path d="M1257.9 816.9L1259.9 819.9L1256.2 844.4L1254.7 846.4L1257.6 819.9z" fill="#4e4b46" stroke="#151515" stroke-width="0.7" stroke-linejoin="round" />
<path d="M1197.2 781.6L1247.0 828.6L1246.8 830.8L1196.9 783.5z" fill="#77726a" stroke="#151515" stroke-width="0.7" stroke-linejoin="round" />
<path d="M1210.3 793.4L1230.9 812.7L1229.9 821.6L1209.4 801.6z" fill="#8f8a81" stroke="#151515" stroke-width="0.8" stroke-linejoin="round" />
<path d="M1213.2 804.7L1226.8 818.2L1226.5 821.3L1212.8 807.8z" fill="#77726a" stroke="#151515" stroke-width="0.7" stroke-linejoin="round" />
<path d="M1212.0 518.2L1236.0 516.0L1236.0 527.0L1212.0 527.0z" fill="#000" opacity="0.12" filter="url(#bl3)"/><path d="M1210.0 511.9L1220.8 519.6L1220.8 524.0L1210.0 515.6z" fill="#4d4a45" stroke="#151515" stroke-width="0.8" stroke-linejoin="round" /><path d="M1220.8 519.6L1234.0 509.7L1234.0 514.1L1220.8 524.0z" fill="#5f5b55" stroke="#151515" stroke-width="0.8" stroke-linejoin="round" /><path d="M1210.0 511.9L1223.2 502.0L1234.0 509.7L1220.8 519.6z" fill="#7a746a" stroke="#151515" stroke-width="0.9" stroke-linejoin="round" />
<path d="M1185.0 591.0L1199.0 590.0L1199.0 595.0L1185.0 595.0z" fill="#000" opacity="0.12" filter="url(#bl3)"/><path d="M1183.0 586.5L1189.3 590.0L1189.3 592.0L1183.0 588.2z" fill="#4d4a45" stroke="#151515" stroke-width="0.8" stroke-linejoin="round" /><path d="M1189.3 590.0L1197.0 585.5L1197.0 587.5L1189.3 592.0z" fill="#5f5b55" stroke="#151515" stroke-width="0.8" stroke-linejoin="round" /><path d="M1183.0 586.5L1190.7 582.0L1197.0 585.5L1189.3 590.0z" fill="#7a746a" stroke="#151515" stroke-width="0.9" stroke-linejoin="round" />
<path d="M1184.0 705.8L1195.0 705.0L1195.0 709.0L1184.0 709.0z" fill="#000" opacity="0.12" filter="url(#bl3)"/><path d="M1182.0 701.6L1187.0 704.4L1187.0 706.0L1182.0 703.0z" fill="#4d4a45" stroke="#151515" stroke-width="0.8" stroke-linejoin="round" /><path d="M1187.0 704.4L1193.0 700.8L1193.0 702.4L1187.0 706.0z" fill="#5f5b55" stroke="#151515" stroke-width="0.8" stroke-linejoin="round" /><path d="M1182.0 701.6L1188.0 698.0L1193.0 700.8L1187.0 704.4z" fill="#7a746a" stroke="#151515" stroke-width="0.9" stroke-linejoin="round" />
<path d="M1194.0 742.0L1217.0 740.0L1217.0 750.0L1194.0 750.0z" fill="#000" opacity="0.12" filter="url(#bl3)"/><path d="M1192.0 736.0L1202.3 743.0L1202.3 747.0L1192.0 739.4z" fill="#4d4a45" stroke="#151515" stroke-width="0.8" stroke-linejoin="round" /><path d="M1202.3 743.0L1215.0 734.0L1215.0 738.0L1202.3 747.0z" fill="#5f5b55" stroke="#151515" stroke-width="0.8" stroke-linejoin="round" /><path d="M1192.0 736.0L1204.7 727.0L1215.0 734.0L1202.3 743.0z" fill="#7a746a" stroke="#151515" stroke-width="0.9" stroke-linejoin="round" />
<path d="M1243.0 759.8L1254.0 759.0L1254.0 763.0L1243.0 763.0z" fill="#000" opacity="0.12" filter="url(#bl3)"/><path d="M1241.0 755.6L1246.0 758.4L1246.0 760.0L1241.0 757.0z" fill="#4d4a45" stroke="#151515" stroke-width="0.8" stroke-linejoin="round" /><path d="M1246.0 758.4L1252.0 754.8L1252.0 756.4L1246.0 760.0z" fill="#5f5b55" stroke="#151515" stroke-width="0.8" stroke-linejoin="round" /><path d="M1241.0 755.6L1247.0 752.0L1252.0 754.8L1246.0 758.4z" fill="#7a746a" stroke="#151515" stroke-width="0.9" stroke-linejoin="round" />
<path d="M1252.0 795.6L1277.0 793.5L1277.0 804.0L1252.0 804.0z" fill="#000" opacity="0.12" filter="url(#bl3)"/><path d="M1250.0 789.5L1261.2 796.8L1261.2 801.0L1250.0 793.0z" fill="#4d4a45" stroke="#151515" stroke-width="0.8" stroke-linejoin="round" /><path d="M1261.2 796.8L1275.0 787.4L1275.0 791.5L1261.2 801.0z" fill="#5f5b55" stroke="#151515" stroke-width="0.8" stroke-linejoin="round" /><path d="M1250.0 789.5L1263.8 780.0L1275.0 787.4L1261.2 796.8z" fill="#7a746a" stroke="#151515" stroke-width="0.9" stroke-linejoin="round" />
<path d="M1825.0 473.0L1855.0 463.0L1858.0 481.0L1830.0 485.0z" fill="#000" opacity="0.2" filter="url(#bl3)"/>
<path d="M1838.0 460.0L1844.0 453.0L1856.0 465.0L1856.0 474.0L1848.0 476.0L1836.0 468.0z" fill="#605c56" stroke="#151515" stroke-width="1.1" stroke-linejoin="round" />
<path d="M1844.0 453.0L1856.0 465.0L1850.0 470.0L1839.0 459.0z" fill="#7a756c" stroke="#151515" stroke-width="0.9" stroke-linejoin="round" />
<ellipse cx="1826" cy="470.5" rx="4.6" ry="5.3" fill="#56534d" stroke="#111" stroke-width="1.2" transform="rotate(-30 1826 470.5)"/>
<path d="M1826.0 466.0L1836.0 461.0L1840.0 470.0L1829.0 476.0z" fill="#6a665f" stroke="#151515" stroke-width="1.0" stroke-linejoin="round" />
<path d="M1396.0 480.0L1609.0 650.0L1600.0 659.0L1390.0 489.0z" fill="#000" opacity="0.06" filter="url(#bl5)"/>
<path d="M1563.0 345.5L1780.5 501.2L1767.4 531.6L1551.0 379.4z" fill="url(#gWall)" stroke="#151515" stroke-width="1.1" stroke-linejoin="round" />
<path d="M1563.0 345.5L1566.0 343.0L1783.6 499.3L1780.5 501.2z" fill="#6d6961" stroke="#151515" stroke-width="0.8" stroke-linejoin="round" />
<path d="M1780.5 501.2L1783.6 499.3L1771.3 539.0L1767.4 536.0z" fill="#5e5a54" stroke="#151515" stroke-width="0.8" stroke-linejoin="round" />
<path d="M1551.0 379.4L1767.4 531.6L1636.2 618.6L1421.0 454.3z" fill="#6c675f" stroke="#151515" stroke-width="1.1" stroke-linejoin="round" />
<path d="M1421.0 454.3L1636.2 618.6L1633.9 623.3L1609.3 641.8L1394.0 472.7z" fill="#69645b" stroke="#151515" stroke-width="1.1" stroke-linejoin="round" />
<path d="M1421.0 454.3L1636.2 618.6L1633.9 623.3L1418.0 460.0z" fill="#55524c" stroke="#151515" stroke-width="0.8" stroke-linejoin="round" />
<path d="M1394.0 472.7L1609.3 641.8L1609.3 648.0L1394.0 479.0z" fill="#4c4944" stroke="#151515" stroke-width="0.9" stroke-linejoin="round" />
<path d="M1636.2 618.6L1767.4 531.6L1771.3 539.0L1609.3 648.0L1609.3 641.8L1633.9 623.3z" fill="#4c4944" stroke="#151515" stroke-width="0.9" stroke-linejoin="round" />
<circle cx="1421" cy="475.5" r="1.6" fill="#1c1b19"/>
<circle cx="1610" cy="621" r="1.6" fill="#1c1b19"/>
<circle cx="1561" cy="351" r="1.6" fill="#1c1b19"/>
<circle cx="1774" cy="501" r="1.6" fill="#1c1b19"/>
<path d="M933.0 306.0L1111.0 456.0L1107.0 486.0L995.0 421.0L931.0 342.0z" fill="#000" opacity="0.2" filter="url(#bl6)"/>
<path d="M1120.0 479.0L1295.0 389.0L1298.0 396.0L1120.0 494.0z" fill="#000" opacity="0.15" filter="url(#bl5)"/>
<path d="M935.0 290.0L942.0 300.0L962.0 316.0L963.0 322.0L939.0 336.0L935.0 333.0z" fill="#3b3935" stroke="#151515" stroke-width="1.1" stroke-linejoin="round" />
<path d="M935.0 296.0L939.0 300.0L939.0 336.0L935.0 333.0z" fill="#55524c" stroke="#151515" stroke-width="0.8" stroke-linejoin="round" />
<path d="M939.0 331.0L961.0 318.0L963.0 322.0L939.0 336.0z" fill="#5c5852" stroke="#151515" stroke-width="0.8" stroke-linejoin="round" />
<path d="M935.0 284.6L1120.0 437.7L1120.0 443.5L935.0 290.5z" fill="#66625a" stroke="#151515" stroke-width="1.1" stroke-linejoin="round" />
<path d="M935.0 290.5L1120.0 443.5L1118.0 450.0L936.0 296.0z" fill="#4f4c47" stroke="#151515" stroke-width="1.1" stroke-linejoin="round" />
<path d="M1106.0 445.0L1117.0 449.0L1117.0 481.0L1106.0 475.0z" fill="#2e2c29" stroke="#151515" stroke-width="0.9" stroke-linejoin="round" />
<path d="M1106.0 445.0L1112.0 448.0L1113.0 478.0L1106.0 475.0z" fill="#615d57" stroke="#151515" stroke-width="0.9" stroke-linejoin="round" />
<path d="M1120.0 437.7L1299.8 341.6L1294.7 391.1L1224.0 429.5L1220.0 427.5L1183.0 447.9L1179.0 455.0L1117.0 486.5z" fill="#363431" stroke="#151515" stroke-width="1.1" stroke-linejoin="round" />
<path d="M1120.0 437.7L1299.8 341.6L1299.3 352.0L1120.0 448.5z" fill="#4e4b46" stroke="#151515" stroke-width="0.9" stroke-linejoin="round" />
<path d="M1119.5 451.2L1297.9 355.1" fill="none" stroke="#5e5a54" stroke-width="0.8" />
<path d="M1119.5 454.1L1297.5 358.0" fill="none" stroke="#5e5a54" stroke-width="0.8" />
<path d="M1119.5 457.0L1297.2 360.9" fill="none" stroke="#5e5a54" stroke-width="0.8" />
<path d="M1119.5 459.9L1296.8 363.8" fill="none" stroke="#5e5a54" stroke-width="0.8" />
<path d="M1119.5 462.8L1296.5 366.7" fill="none" stroke="#5e5a54" stroke-width="0.8" />
<path d="M1119.5 465.7L1296.1 369.6" fill="none" stroke="#5e5a54" stroke-width="0.8" />
<path d="M1119.5 468.6L1295.8 372.5" fill="none" stroke="#5e5a54" stroke-width="0.8" />
<path d="M1119.5 471.5L1295.4 375.4" fill="none" stroke="#5e5a54" stroke-width="0.8" />
<path d="M1119.5 474.4L1295.1 378.3" fill="none" stroke="#5e5a54" stroke-width="0.8" />
<path d="M1119.5 477.3L1294.7 381.2" fill="none" stroke="#5e5a54" stroke-width="0.8" />
<path d="M1119.5 480.2L1294.4 384.1" fill="none" stroke="#5e5a54" stroke-width="0.8" />
<path d="M1117.0 478.0L1179.0 446.5L1183.0 440.0L1220.0 420.0L1224.0 422.0L1296.0 383.0L1294.7 391.1L1224.0 429.5L1220.0 427.5L1183.0 447.9L1179.0 455.0L1117.0 486.5z" fill="#55524c" stroke="#151515" stroke-width="0.8" stroke-linejoin="round" />
<path d="M1116.5 440.0L1116.5 487.0" fill="none" stroke="#151515" stroke-width="1.0" />
<path d="M935.0 284.6L1109.6 199.7L1299.8 341.6L1120.0 437.7z" fill="url(#gTop)" stroke="#151515" stroke-width="1.3" stroke-linejoin="round" />
<circle cx="953.0" cy="287.6" r="1.55" fill="#1c1b19"/>
<circle cx="957.0" cy="291.0" r="1.55" fill="#1c1b19"/>
<circle cx="961.0" cy="294.4" r="1.55" fill="#1c1b19"/>
<circle cx="965.0" cy="297.8" r="1.55" fill="#1c1b19"/>
<circle cx="969.0" cy="301.2" r="1.55" fill="#1c1b19"/>
<circle cx="958.2" cy="285.1" r="1.55" fill="#1c1b19"/>
<circle cx="962.2" cy="288.5" r="1.55" fill="#1c1b19"/>
<circle cx="966.2" cy="291.9" r="1.55" fill="#1c1b19"/>
<circle cx="970.2" cy="295.3" r="1.55" fill="#1c1b19"/>
<circle cx="974.2" cy="298.7" r="1.55" fill="#1c1b19"/>
<circle cx="963.4" cy="282.6" r="1.55" fill="#1c1b19"/>
<circle cx="967.4" cy="286.0" r="1.55" fill="#1c1b19"/>
<circle cx="971.4" cy="289.4" r="1.55" fill="#1c1b19"/>
<circle cx="975.4" cy="292.8" r="1.55" fill="#1c1b19"/>
<circle cx="979.4" cy="296.2" r="1.55" fill="#1c1b19"/>
<circle cx="968.6" cy="280.1" r="1.55" fill="#1c1b19"/>
<circle cx="972.6" cy="283.5" r="1.55" fill="#1c1b19"/>
<circle cx="976.6" cy="286.9" r="1.55" fill="#1c1b19"/>
<circle cx="980.6" cy="290.3" r="1.55" fill="#1c1b19"/>
<circle cx="984.6" cy="293.7" r="1.55" fill="#1c1b19"/>
<circle cx="973.8" cy="277.6" r="1.55" fill="#1c1b19"/>
<circle cx="977.8" cy="281.0" r="1.55" fill="#1c1b19"/>
<circle cx="981.8" cy="284.4" r="1.55" fill="#1c1b19"/>
<circle cx="985.8" cy="287.8" r="1.55" fill="#1c1b19"/>
<circle cx="989.8" cy="291.2" r="1.55" fill="#1c1b19"/>
<defs><filter id="vcs" x="-50%" y="-50%" width="200%" height="200%"><feGaussianBlur stdDeviation="4"/></filter><linearGradient id="vcg" x1="0" y1="0" x2="1" y2="1"><stop offset="0" stop-color="#f2f2f2"/><stop offset="1" stop-color="#dedede"/></linearGradient></defs><path d="M1836 222L1862 248L1900 226L1880 212z" fill="#000" opacity="0.25" filter="url(#vcs)"/><path d="M1830 183L1869 165L1900 189L1860 212z" fill="#efefef" opacity="0.92"/><path d="M1830 183L1860 212L1860 243L1834 217z" fill="#e4e4e4" opacity="0.92"/><path d="M1860 212L1900 189L1896 222L1860 243z" fill="#e9e9e9" opacity="0.92"/><path d="M1830 183L1869 165L1900 189L1896 222L1860 243L1834 217z" fill="none" stroke="#666" stroke-width="0.8" stroke-dasharray="2.5 2"/><path d="M1830 183L1860 212L1900 189M1860 212V243" fill="none" stroke="#777" stroke-width="0.8" stroke-dasharray="2.5 2"/><path d="M1852 183L1860 199M1859 192L1871 186M1860 199L1875 192" stroke="#858a90" stroke-width="1.6" fill="none"/><path d="M1838 204L1838 220M1838 204L1845 208L1844 225M1841 210V220M1841 214L1844 215" stroke="#858a90" stroke-width="1.2" fill="none"/><path d="M1870 215L1888 206M1878 207L1870 226M1876 218L1886 214L1885 222L1875 225z" stroke="#858a90" stroke-width="1.3" fill="none"/><path d="M1828 178L1834 217" stroke="#4a4adf" stroke-width="1.6"/><path d="M1834 217L1864 250" stroke="#e67a7a" stroke-width="1.6"/><text x="1822" y="176" font-family="Liberation Sans" font-size="11" fill="#6a6af0">Z</text><text x="1865" y="261" font-family="Liberation Sans" font-size="10" fill="#f07070">X</text>
</g></svg>
<div style="position:absolute;left:8px;top:0;width:1920px;height:23px;background:#fff"></div>
<svg style="position:absolute;left:11px;top:3px" width="15" height="17" viewBox="0 0 15 17" ><rect x="0.5" y="0.5" width="13" height="12" rx="2" fill="#ff6d00"/><rect x="0" y="1.5" width="3" height="11" fill="#ff8c3a"/><rect x="1.5" y="11" width="12.5" height="5.5" rx="1.5" fill="#b5400a"/><path d="M5.3 3.3H10.2V4.9H7V6.6H9.7V8.1H7V10.6H5.3z" fill="#fff"/><rect x="4" y="12.8" width="6.5" height="1.6" fill="#f3b58f"/></svg>
<div class="title">PC-9801U2_open v2* (g catsin) - Autodesk Fusion 個人用(商用利用不可)</div>
<svg style="position:absolute;left:1806px;top:9px" width="12" height="2" viewBox="0 0 12 2" ><rect width="12" height="1.2" y="0.4" fill="#222"/></svg>
<svg style="position:absolute;left:1851px;top:4px" width="12" height="12" viewBox="0 0 12 12" ><path d="M2.5 3.5h7v7h-7z M4.5 3.5V1.5h6.5v6.5h-1.5" fill="none" stroke="#222" stroke-width="1.1"/></svg>
<svg style="position:absolute;left:1896px;top:4px" width="12" height="12" viewBox="0 0 12 12" ><path d="M1 1L11 11M11 1L1 11" stroke="#222" stroke-width="1.2"/></svg>
<div style="position:absolute;left:8px;top:23px;width:1920px;height:32px;background:#cbcbcb"></div>
<svg style="position:absolute;left:16px;top:31px" width="16" height="16" viewBox="0 0 16 16" ><rect x="1" y="1" width="4" height="4" rx="0.8" fill="#666"/><rect x="1" y="6" width="4" height="4" rx="0.8" fill="#666"/><rect x="1" y="11" width="4" height="4" rx="0.8" fill="#666"/><rect x="6" y="1" width="4" height="4" rx="0.8" fill="#666"/><rect x="6" y="6" width="4" height="4" rx="0.8" fill="#666"/><rect x="6" y="11" width="4" height="4" rx="0.8" fill="#666"/><rect x="11" y="1" width="4" height="4" rx="0.8" fill="#666"/><rect x="11" y="6" width="4" height="4" rx="0.8" fill="#666"/><rect x="11" y="11" width="4" height="4" rx="0.8" fill="#666"/></svg>
<svg style="position:absolute;left:49px;top:30px" width="30" height="18" viewBox="0 0 30 18" ><path d="M1.5 1.5h8l4 4V16.5h-12z" fill="#666" stroke="#666" stroke-linejoin="round"/><path d="M9.5 1.5v4h4" fill="#cbcbcb"/><path d="M9.5 1v4.5h4.5" fill="none" stroke="#cbcbcb" stroke-width="0.8"/><path d="M20 6h8l-4 5z" fill="#666"/></svg>
<svg style="position:absolute;left:94px;top:31px" width="16" height="16" viewBox="0 0 16 16" ><path d="M1.5 1.5h11l2 2v11h-13z" fill="#666" stroke="#666" stroke-linejoin="round"/><rect x="4" y="2" width="7" height="4.5" fill="#cbcbcb"/><rect x="5" y="2" width="5" height="3.5" fill="#666"/><rect x="4" y="9.5" width="7" height="5" fill="#cbcbcb"/><rect x="5.5" y="10.5" width="4" height="4" fill="#666"/></svg>
<svg style="position:absolute;left:127px;top:32px" width="30" height="15" viewBox="0 0 30 15" ><path d="M5 2L1.5 5.5L5 9M2 5.5h6.5C11.5 5.5 13 8 13 12.5" fill="none" stroke="#666" stroke-width="1.9" stroke-linecap="round" stroke-linejoin="round"/><path d="M21 4h7l-3.5 4.5z" fill="#666"/></svg>
<svg style="position:absolute;left:167px;top:32px" width="30" height="15" viewBox="0 0 30 15" ><path d="M9 2L12.5 5.5L9 9M12 5.5H5.5C2.5 5.5 1 8 1 12.5" fill="none" stroke="#999" stroke-width="1.9" stroke-linecap="round" stroke-linejoin="round"/><path d="M20 4h7l-3.5 4.5z" fill="#999"/></svg>
<div style="position:absolute;left:203px;top:27px;width:489px;height:28px;background:#bcbcbc;border-radius:6px 6px 0 0"></div>
<svg style="position:absolute;left:372px;top:34px" width="15" height="16" viewBox="0 0 15 16" ><path d="M7.5 0.5L14.5 4v8L7.5 15.5L0.5 12V4z" fill="#f58a2e"/><path d="M7.5 0.5L14.5 4L7.5 7.5L0.5 4z" fill="#ffc08a"/><path d="M7.5 7.5L14.5 4v8L7.5 15.5z" fill="#ff6a00"/></svg>
<div class="tabt" style="left:391px;color:#555">PC-9801U2_open2 v3</div>
<svg style="position:absolute;left:676px;top:36px" width="10" height="10" viewBox="0 0 10 10" ><path d="M1 1L9 9M9 1L1 9" stroke="#6b6b6b" stroke-width="1.3"/></svg>
<div style="position:absolute;left:696px;top:27px;width:489px;height:28px;background:#bcbcbc;border-radius:6px 6px 0 0"></div>
<svg style="position:absolute;left:912px;top:33px" width="11" height="14" viewBox="0 0 11 14" ><path d="M2.5 6V4a3 3 0 0 1 6 0V6" fill="none" stroke="#666" stroke-width="1.4"/><rect x="0.5" y="6" width="10" height="7.5" rx="1" fill="#666"/><rect x="2.5" y="8.5" width="6" height="1" fill="#bcbcbc"/><rect x="2.5" y="10.8" width="6" height="1" fill="#bcbcbc"/></svg>
<div class="tabt" style="left:930px;color:#555">無題*</div>
<svg style="position:absolute;left:1169px;top:36px" width="10" height="10" viewBox="0 0 10 10" ><path d="M1 1L9 9M9 1L1 9" stroke="#6b6b6b" stroke-width="1.3"/></svg>
<div style="position:absolute;left:1189px;top:27px;width:489px;height:28px;background:#f1f1f1;border-radius:6px 6px 0 0"></div>
<svg style="position:absolute;left:1359px;top:34px" width="15" height="16" viewBox="0 0 15 16" ><path d="M7.5 0.5L14.5 4v8L7.5 15.5L0.5 12V4z" fill="#f58a2e"/><path d="M7.5 0.5L14.5 4L7.5 7.5L0.5 4z" fill="#ffc08a"/><path d="M7.5 7.5L14.5 4v8L7.5 15.5z" fill="#ff6a00"/></svg>
<div class="tabt" style="left:1378px;color:#222">PC-9801U2_open v2*</div>
<svg style="position:absolute;left:1662px;top:36px" width="10" height="10" viewBox="0 0 10 10" ><path d="M1 1L9 9M9 1L1 9" stroke="#6b6b6b" stroke-width="1.3"/></svg>
<div style="position:absolute;left:1682px;top:27px;width:28px;height:28px;background:#bbbbbb;border-radius:5px 5px 0 0"></div>
<svg style="position:absolute;left:1690px;top:34px" width="13" height="13" viewBox="0 0 13 13" ><path d="M6.5 0v13M0 6.5h13" stroke="#7a7a7a" stroke-width="2.6"/></svg>
<svg style="position:absolute;left:1721px;top:30px" width="17" height="17" viewBox="0 0 17 17" ><circle cx="8.5" cy="8.5" r="8" fill="#1e90e0"/><path d="M8.8 2.8L12.3 7.5H10.2C10 10.5 9 12.8 6.5 14.2C7.6 12.3 7.8 10 7.5 7.5H5.4z" fill="#fff"/></svg>
<svg style="position:absolute;left:1754px;top:30px" width="18" height="18" viewBox="0 0 18 18" ><path d="M13.2 3.2A7 7 0 1 0 15.5 10" fill="none" stroke="#666" stroke-width="2.2"/><path d="M9 5L14 2L15.5 7.5L10.5 9.5z" fill="#666"/><path d="M5.5 11L9 8" stroke="#cbcbcb" stroke-width="1.2"/></svg>
<svg style="position:absolute;left:1787px;top:30px" width="18" height="18" viewBox="0 0 18 18" ><circle cx="9" cy="9" r="8" fill="#666"/><circle cx="9" cy="9" r="6.8" fill="none" stroke="#cbcbcb" stroke-width="0.9"/><path d="M8 4.5V10H12.5" fill="none" stroke="#cbcbcb" stroke-width="1.3"/></svg>
<svg style="position:absolute;left:1821px;top:30px" width="17" height="18" viewBox="0 0 17 18" ><path d="M8 1.5C6 3 5 5 5 8V11.5L2.5 14H13.5L11 11.5V8C11 5 10 3 8 1.5z" fill="#666"/><path d="M6.5 15.3h3L8 16.8z" fill="#666"/><circle cx="12.3" cy="4.3" r="3.2" fill="#1d9be6"/></svg>
<svg style="position:absolute;left:1853px;top:30px" width="18" height="18" viewBox="0 0 18 18" ><circle cx="9" cy="9" r="8" fill="#666"/><path d="M6.2 6.7C6.2 4 11.8 4 11.8 6.7C11.8 8.7 9 8.8 9 11" fill="none" stroke="#cbcbcb" stroke-width="2"/><rect x="8" y="12.5" width="2" height="2" fill="#cbcbcb"/></svg>
<svg style="position:absolute;left:1890px;top:26px" width="26" height="26" viewBox="0 0 26 26" ><defs><linearGradient id="av" x1="0" y1="0" x2="0" y2="1"><stop offset="0" stop-color="#c6d1de"/><stop offset="1" stop-color="#8fa3bb"/></linearGradient><clipPath id="avc"><circle cx="13" cy="13" r="12"/></clipPath></defs><circle cx="13" cy="13" r="12" fill="url(#av)"/><g clip-path="url(#avc)"><path d="M8.5 9C8.5 3.5 17.5 3.5 17.5 9.5C17.5 12.5 16 15 15.5 16.5C19 17.5 22 19.5 23 26H3C4 19.5 7 17.5 10.5 16.5C10 15 8.5 12.5 8.5 9z" fill="#56657c"/></g></svg>
<div style="position:absolute;left:8px;top:55px;width:1920px;height:82px;background:#f1f1f1;border-bottom:1px solid #dadada;box-sizing:border-box"></div>
<div style="position:absolute;left:20px;top:66px;width:109px;height:60px;border:1px solid #d6d6d6;border-radius:4px;box-sizing:border-box"></div>
<div class="tl" style="left:52px;top:89px;font-size:11px;color:#222">デザイン</div>
<svg style="position:absolute;left:92px;top:93px" width="7" height="5" viewBox="0 0 7 5" ><path d="M0 0h7L3.5 4.5z" fill="#333"/></svg>
<div class="tl" style="left:158px;top:61px;color:#1996d2">ソリッド</div>
<div class="tl" style="left:236px;top:61px;color:#444">サーフェス</div>
<div class="tl" style="left:318px;top:61px;color:#444">メッシュ</div>
<div class="tl" style="left:397px;top:61px;color:#444">フォーム</div>
<div class="tl" style="left:475px;top:61px;color:#444">シート メタル</div>
<div class="tl" style="left:573px;top:61px;color:#444">プラスチック</div>
<div class="tl" style="left:666px;top:61px;color:#444">ユーティリティ</div>
<div style="position:absolute;left:146px;top:76px;width:56px;height:3px;background:#1996d2"></div>
<div style="position:absolute;left:359px;top:82px;width:1px;height:51px;background:#d9d9d9"></div>
<div style="position:absolute;left:628px;top:82px;width:1px;height:51px;background:#d9d9d9"></div>
<div style="position:absolute;left:725px;top:82px;width:1px;height:51px;background:#d9d9d9"></div>
<div style="position:absolute;left:849px;top:82px;width:1px;height:51px;background:#d9d9d9"></div>
<div style="position:absolute;left:908px;top:82px;width:1px;height:51px;background:#d9d9d9"></div>
<div style="position:absolute;left:967px;top:82px;width:1px;height:51px;background:#d9d9d9"></div>
<div style="position:absolute;left:1064px;top:82px;width:1px;height:51px;background:#d9d9d9"></div>
<div class="tl" style="left:229px;top:121px;color:#444">作成<span class="dd"></span></div>
<div class="tl" style="left:476px;top:121px;color:#444">修正<span class="dd"></span></div>
<div class="tl" style="left:650px;top:121px;color:#444">アセンブリ<span class="dd"></span></div>
<div class="tl" style="left:739px;top:121px;color:#444">コンフィギュレーション<span class="dd"></span></div>
<div class="tl" style="left:864px;top:121px;color:#444">構築<span class="dd"></span></div>
<div class="tl" style="left:922px;top:121px;color:#444">検査<span class="dd"></span></div>
<div class="tl" style="left:998px;top:121px;color:#444">挿入<span class="dd"></span></div>
<div class="tl" style="left:1078px;top:121px;color:#444">選択<span class="dd"></span></div>
<svg style="position:absolute;left:144px;top:82px" width="34" height="32" viewBox="0 0 34 32" ><rect x="2" y="2" width="27" height="27" fill="none" stroke="#555" stroke-width="1" stroke-dasharray="3 1.5"/><rect x="0.5" y="0.5" width="3" height="3" fill="#555"/><rect x="27.5" y="0.5" width="3" height="3" fill="#555"/><rect x="0.5" y="27.5" width="3" height="3" fill="#555"/><rect x="7" y="7" width="14" height="14" fill="none" stroke="#555" stroke-width="0.9" stroke-dasharray="2.5 1.5"/><path d="M7.5 20.5C14 20 20 15 20.5 7.5" fill="none" stroke="#555" stroke-width="1"/><path d="M25.5 17.5v14M18.5 24.5h14" stroke="#1aa63a" stroke-width="3.5"/></svg>
<svg style="position:absolute;left:188px;top:82px" width="32" height="33" viewBox="0 0 32 33" ><path d="M2 30h23l4-4H6z" fill="#c4c4c4"/><path d="M2 28V7h19v21z" fill="#5aa8e6"/><path d="M2 7l4-4h19l-4 4z" fill="#9dd2f8"/><path d="M21 7l4-4v21l-4 4z" fill="#3a86c8"/><path d="M28.5 28V2M26.5 5.5L28.5 1.5L30.5 5.5" stroke="#222" stroke-width="1.2" fill="none"/></svg>
<svg style="position:absolute;left:230px;top:82px" width="34" height="32" viewBox="0 0 34 32" ><path d="M3 10C10 2 24 2 31 9" fill="none" stroke="#333" stroke-width="1.1"/><path d="M2 11L6.5 7.5L5.5 13z" fill="#333"/><path d="M1 16C9 10 23 10 27 16V25C23 19 9 19 5 27L1 23z" fill="#5aa8e6"/><path d="M1 16C9 10 23 10 27 16L32 13C26 8 12 7 5 12z" fill="#9dd2f8"/><path d="M27 16L32 13V22L27 25z" fill="#fff" stroke="#444" stroke-width="0.8"/><path d="M1 16V23L5 27V20z" fill="#3a86c8"/></svg>
<svg style="position:absolute;left:273px;top:82px" width="34" height="33" viewBox="0 0 34 33" ><path d="M1 6L6 1H32V27L27 32H1z" fill="#dcdcdc" stroke="#555" stroke-width="0.9"/><path d="M1 6H27V32M27 6L32 1" fill="none" stroke="#555" stroke-width="0.9"/><path d="M27 6L32 1V27L27 32z" fill="#bdbdbd"/><circle cx="14" cy="19" r="8" fill="#fff" stroke="#555" stroke-width="1"/><path d="M9.5 15A7 7 0 1 0 18.5 15.5A5 5 0 0 1 9.5 15z" fill="#5aa8e6"/></svg>
<svg style="position:absolute;left:315px;top:82px" width="32" height="32" viewBox="0 0 32 32" ><path d="M4.5 6H27M4.5 6V27H27" fill="none" stroke="#555" stroke-width="1"/><rect x="1" y="2" width="6.5" height="6.5" fill="#fff" stroke="#555" stroke-width="1"/><rect x="23" y="2" width="7" height="7" fill="#5aa8e6"/><rect x="1" y="23" width="7" height="7" fill="#5aa8e6"/><rect x="23" y="23" width="7" height="7" fill="#5aa8e6"/></svg>
<svg style="position:absolute;left:371px;top:82px" width="32" height="32" viewBox="0 0 32 32" ><path d="M1 7L5 3H9V32H1z" fill="#dcdcdc" stroke="#555" stroke-width="0.9"/><path d="M8 7L12 3H22V28L18 32H8z" fill="#5aa8e6"/><path d="M18 7L22 3V28L18 32z" fill="#3a86c8"/><path d="M21 16.5H30M27 14L30 16.5L27 19" stroke="#222" stroke-width="1.3" fill="none"/><path d="M1 7H5V32" fill="none" stroke="#555" stroke-width="0.9"/></svg>
<svg style="position:absolute;left:413px;top:82px" width="34" height="32" viewBox="0 0 34 32" ><path d="M1 7L6 1H18C26 2 31 8 32 16V26L27 32H1z" fill="#dcdcdc" stroke="#555" stroke-width="0.9"/><path d="M16 1.5C24 2 30 8 32 16L27 20C26 13 21 8 13 7z" fill="#5aa8e6"/><path d="M27 20L32 16V26L27 32z" fill="#bdbdbd"/><path d="M1 7H13M27 20V32" fill="none" stroke="#555" stroke-width="0.9"/></svg>
<svg style="position:absolute;left:456px;top:82px" width="34" height="32" viewBox="0 0 34 32" ><path d="M1 6L6 1H33V27L28 32H1z" fill="#dcdcdc" stroke="#555" stroke-width="0.9"/><path d="M28 6L33 1V27L28 32z" fill="#bdbdbd"/><path d="M1 6H28V32" fill="none" stroke="#555" stroke-width="0.9"/><rect x="5" y="10" width="19" height="18" fill="#f4f4f4" stroke="#555" stroke-width="0.8"/><path d="M7 12H12V22H22V26H7z" fill="#3a86c8"/><path d="M12 22H22V26H7z" fill="#9dd2f8"/></svg>
<svg style="position:absolute;left:499px;top:82px" width="34" height="33" viewBox="0 0 34 33" ><path d="M1 14L5 10H13V32H1z" fill="#5aa8e6"/><path d="M11 5L15 1H32V21L28 25H11z" fill="#5aa8e6"/><path d="M28 5L32 1V21L28 25z" fill="#3a86c8"/><path d="M1 14L5 10H11V14z" fill="#9dd2f8"/><path d="M13 25V29L9 32H13" fill="#3a86c8"/></svg>
<svg style="position:absolute;left:542px;top:82px" width="34" height="33" viewBox="0 0 34 33" ><path d="M1 6L5 1H30V12L26 16H1z" fill="#5aa8e6"/><path d="M1 6L5 1H30L26 6z" fill="#9dd2f8"/><path d="M26 6L30 1V12L26 16z" fill="#3a86c8"/><path d="M0 19H26L33 13" fill="none" stroke="#1e90e0" stroke-width="1.6"/><path d="M1 22H26V32H1z" fill="#dcdcdc" stroke="#555" stroke-width="0.9"/><path d="M26 22L30 18V28L26 32z" fill="#bdbdbd" stroke="#555" stroke-width="0.9"/></svg>
<svg style="position:absolute;left:585px;top:82px" width="34" height="33" viewBox="0 0 34 33" ><path d="M17 4V29M4 16.5H30" stroke="#222" stroke-width="2.2"/><path d="M17 0L12 6H22zM17 33L12 27H22zM0 16.5L6 11.5V21.5zM34 16.5L28 11.5V21.5z" fill="#222"/></svg>
<svg style="position:absolute;left:639px;top:82px" width="32" height="33" viewBox="0 0 32 33" ><path d="M1 20H14V32H1z" fill="#dcdcdc" stroke="#555" stroke-width="0.9"/><path d="M14 20H26V32H14z" fill="#dcdcdc" stroke="#555" stroke-width="0.9"/><path d="M14 20L17 17H29V29L26 32" fill="#dcdcdc" stroke="#555" stroke-width="0.9"/><path d="M1 8L4 4H15V20H1z" fill="#5aa8e6"/><path d="M1 8L4 4H15L12 8z" fill="#9dd2f8"/><path d="M12 8L15 4V20H12z" fill="#3a86c8"/><path d="M22 0L23.6 5L28 2.5L25.5 7L30.5 8L25.5 9.5L28 14L23.6 11.5L22 16L20.4 11.5L16 14L18.5 9.5L13.5 8L18.5 7L16 2.5L20.4 5z" fill="#f5a300"/></svg>
<svg style="position:absolute;left:684px;top:82px" width="32" height="32" viewBox="0 0 32 32" ><path d="M2 30V8C2 3 6 1 9 1C11 1 12 2 12 4V14L8 18V30z" fill="#dcdcdc" stroke="#555" stroke-width="0.9"/><path d="M20 14L24 10L31 16V31L27 27V18z" fill="#dcdcdc" stroke="#555" stroke-width="0.9"/><path d="M14 22V30H20V14" fill="#dcdcdc" stroke="#555" stroke-width="0.9"/><path d="M8 18V26M23 10V18" stroke="#1e90e0" stroke-width="1.1"/></svg>
<svg style="position:absolute;left:749px;top:82px" width="34" height="34" viewBox="0 0 34 34" ><path d="M1 6L5 1H22V26H1z" fill="#f4f4f4" stroke="#ddd" stroke-width="0.9"/><circle cx="24" cy="8" r="7" fill="#c5dff3"/><path d="M24 3.5L20.5 7.5H22.5V12H25.5V7.5H27.5z" fill="#fff"/><path d="M19 22H33M19 28H33M23 19V25M28 25V31" stroke="#ddd" stroke-width="1.5"/></svg>
<svg style="position:absolute;left:792px;top:82px" width="34" height="34" viewBox="0 0 34 34" ><rect x="1" y="1" width="21" height="25" fill="#f4f4f4" stroke="#ddd" stroke-width="0.9"/><path d="M1 5H22M1 11H22M1 17H22M8 5V26M15 5V26" stroke="#ddd" stroke-width="0.9"/><circle cx="24" cy="8" r="7" fill="#c5dff3"/><path d="M24 3.5L20.5 7.5H22.5V12H25.5V7.5H27.5z" fill="#fff"/><path d="M19 22H33M19 28H33M23 19V25M28 25V31" stroke="#ddd" stroke-width="1.5"/></svg>
<svg style="position:absolute;left:863px;top:82px" width="32" height="32" viewBox="0 0 32 32" ><path d="M1 10L9 2V25L1 32z" fill="#dcdcdc" stroke="#444" stroke-width="0.9"/><path d="M9 2H12V25H9z" fill="#888"/><path d="M1 10H4V32H1z" fill="#fff" stroke="#444" stroke-width="0.9"/><path d="M9 9L17 1V24L9 31z" fill="#5cc47a" stroke="#444" stroke-width="0.6"/><path d="M21 10L30 1V24L21 32z" fill="#e89a63"/></svg>
<svg style="position:absolute;left:923px;top:88px" width="30" height="20" viewBox="0 0 30 20" ><path d="M1 0V10M29 0V10M2 5H28M5 3L2 5L5 7M25 3L28 5L25 7" stroke="#444" stroke-width="1.1" fill="none"/><rect x="0" y="12" width="30" height="7" fill="#f2a100"/><path d="M3 12V14.5M6 12V14M9 12V14.5M12 12V14M15 12V15M18 12V14M21 12V14.5M24 12V14M27 12V14.5" stroke="#8a5a00" stroke-width="0.8"/></svg>
<svg style="position:absolute;left:977px;top:82px" width="34" height="33" viewBox="0 0 34 33" ><path d="M6 15L10 11H25V29L21 33H6z" fill="#dcdcdc" stroke="#444" stroke-width="0.9"/><path d="M21 15L25 11V29L21 33z" fill="#bdbdbd"/><path d="M6 15H21V33" fill="none" stroke="#444" stroke-width="0.9"/><path d="M0 8H10" stroke="#1e88e5" stroke-width="3.2"/><path d="M9 2L17 8L9 14z" fill="#1e88e5"/><path d="M17 27L22 22M15.5 25.5A3 3 0 0 1 19 22L21 20A3 3 0 0 1 25 24L23 26M24 27A3 3 0 0 1 20 31L18 33A3 3 0 0 1 14 29L16 27" fill="none" stroke="#333" stroke-width="2"/></svg>
<svg style="position:absolute;left:1022px;top:82px" width="31" height="31" viewBox="0 0 31 31" ><rect x="1" y="1" width="29" height="29" fill="#8cc8f5"/><path d="M1 24C6 12 10 12 15 20C18 15 22 14 30 22V30H1z" fill="#3d8ed4"/><circle cx="22" cy="8" r="3.5" fill="#fff3a8"/></svg>
<svg style="position:absolute;left:1075px;top:79px" width="38" height="38" viewBox="0 0 38 38" ><rect width="38" height="38" fill="#0696d7"/><circle cx="17" cy="16" r="11" fill="none" stroke="#7fe3a0" stroke-width="1.3" stroke-dasharray="3 2.5"/><path d="M24 18V33L27.5 29.5L30.5 35.5L33 34.5L30 28.5H35z" fill="#fff"/></svg>
<div class="rbg" style="left:48px;top:175px;width:200px"></div>
<div class="rbg" style="left:66px;top:199px;width:118px"></div>
<div class="rbg" style="left:66px;top:223px;width:126px"></div>
<div class="rbg" style="left:66px;top:247px;width:91px"></div>
<div class="rbg" style="left:66px;top:271px;width:95px"></div>
<div class="rbg" style="left:84px;top:295px;width:123px"></div>
<div class="rbg" style="left:102px;top:319px;width:127px"></div>
<div class="rbg" style="left:102px;top:343px;width:127px"></div>
<div class="rbg" style="left:102px;top:367px;width:127px"></div>
<div class="rbg" style="left:102px;top:391px;width:127px"></div>
<div class="rbg" style="left:102px;top:415px;width:106px"></div>
<div class="rbg" style="left:102px;top:439px;width:155px"></div>
<div class="rbg" style="left:84px;top:463px;width:127px"></div>
<div class="rbg" style="left:84px;top:487px;width:158px"></div>
<div class="rbg" style="left:84px;top:511px;width:115px"></div>
<div class="rbg" style="left:84px;top:535px;width:135px"></div>
<div class="rbg" style="left:84px;top:559px;width:123px"></div>
<div class="rbg" style="left:84px;top:583px;width:119px"></div>
<div class="rbg" style="left:84px;top:607px;width:119px"></div>
<div class="rbg" style="left:84px;top:631px;width:119px"></div>
<div class="rbg" style="left:84px;top:655px;width:111px"></div>
<div class="rbg" style="left:84px;top:679px;width:163px"></div>
<div class="rbg" style="left:84px;top:703px;width:127px"></div>
<div class="rbg" style="left:84px;top:727px;width:159px"></div>
<div class="rbg" style="left:84px;top:751px;width:178px"></div>
<div class="rbg" style="left:84px;top:775px;width:107px"></div>
<div class="rbg" style="left:84px;top:799px;width:123px"></div>
<div class="rbg" style="left:84px;top:823px;width:131px"></div>
<div class="rbg" style="left:84px;top:847px;width:147px"></div>
<div class="rbg" style="left:84px;top:871px;width:182px"></div>
<div class="rbg" style="left:84px;top:895px;width:167px"></div>
<div class="rbg" style="left:84px;top:919px;width:139px"></div>
<div class="rbg" style="left:66px;top:943px;width:111px"></div>
<div class="rbg" style="left:66px;top:967px;width:99px"></div>
<div class="rbg" style="left:66px;top:991px;width:139px"></div>
<div class="rbg" style="left:66px;top:1015px;width:106px"></div>
<div class="rbg" style="left:66px;top:1039px;width:106px"></div>
<div class="rbg" style="left:66px;top:1063px;width:90px"></div>
<div class="rbg" style="left:66px;top:1087px;width:90px"></div>
<div class="bhead"><span class="btitle">ブラウザ</span><span class="minus"></span></div>
<svg style="position:absolute;left:17px;top:152px" width="11" height="8" viewBox="0 0 11 8" ><path d="M5 0.5V7.5L0.5 4zM10.5 0.5V7.5L6 4z" fill="#222"/></svg>
<div style="position:absolute;left:16px;top:174px;width:6px;height:934px;background:rgba(185,185,190,0.78);border-radius:3px"></div>
<div style="position:absolute;left:16px;top:174px;width:6px;height:102px;background:rgba(120,120,120,0.75);border-radius:3px"></div>
<svg style="position:absolute;left:29px;top:178px" width="11" height="11" viewBox="0 0 11 11" ><defs><linearGradient id="tg178" x1="0" x2="1"><stop offset="0" stop-color="#fff"/><stop offset="1" stop-color="#777"/></linearGradient></defs><path d="M10.5 0.5V10.5H0.5z" fill="url(#tg178)" stroke="#222" stroke-width="1"/></svg>
<svg style="position:absolute;left:50px;top:178px" width="18" height="12" viewBox="0 0 18 12" ><path d="M0.5 6C3.5 0.5 14.5 0.5 17.5 6C14.5 11.5 3.5 11.5 0.5 6z" fill="#8e8e8e"/><circle cx="9" cy="6" r="3.1" fill="#eeeeee"/><circle cx="9" cy="6" r="1.7" fill="#8e8e8e"/></svg>
<div style="position:absolute;left:73px;top:175px;width:150px;height:18px;background:#999"></div>
<svg style="position:absolute;left:75px;top:175px" width="18" height="18" viewBox="0 0 18 18" ><path d="M1 4L3.5 1.5H8.5V8.5L11 6H16V16.5H1z" fill="#f4f4f6" stroke="#333" stroke-width="1"/><path d="M1 4H6V16.5M6 4L8.5 1.5M6 11H13.5V16.5M13.5 11L16 8.5M8.5 8.5H16" fill="none" stroke="#555" stroke-width="0.8"/><rect x="1.5" y="4.5" width="4" height="6" fill="#d9dde3"/></svg>
<div class="rtxt" style="left:106px;top:175px;color:#fff;font-weight:bold;font-size:10.6px">PC-9801U2_open v2</div>
<svg style="position:absolute;left:226px;top:177px" width="15" height="15" viewBox="0 0 15 15" ><circle cx="7.5" cy="7.5" r="6.3" fill="#fff" stroke="#333" stroke-width="1.2"/><circle cx="7.5" cy="7.5" r="2.4" fill="#222"/></svg>
<svg style="position:absolute;left:48px;top:201px" width="10" height="14" viewBox="0 0 10 14" ><path d="M1 1L9 7L1 13z" fill="#e4e4e6" stroke="#333" stroke-width="1.2" stroke-linejoin="round"/></svg>
<svg style="position:absolute;left:69px;top:200px" width="14" height="14" viewBox="0 0 14 14" ><g transform="translate(7 7)"><circle r="4.6" fill="#888"/><rect x="-1.4" y="-7" width="2.8" height="3.5" fill="#888" transform="rotate(0)"/><rect x="-1.4" y="-7" width="2.8" height="3.5" fill="#888" transform="rotate(45)"/><rect x="-1.4" y="-7" width="2.8" height="3.5" fill="#888" transform="rotate(90)"/><rect x="-1.4" y="-7" width="2.8" height="3.5" fill="#888" transform="rotate(135)"/><rect x="-1.4" y="-7" width="2.8" height="3.5" fill="#888" transform="rotate(180)"/><rect x="-1.4" y="-7" width="2.8" height="3.5" fill="#888" transform="rotate(225)"/><rect x="-1.4" y="-7" width="2.8" height="3.5" fill="#888" transform="rotate(270)"/><rect x="-1.4" y="-7" width="2.8" height="3.5" fill="#888" transform="rotate(315)"/><circle r="2" fill="#f0f0f0"/></g></svg>
<div class="rtxt" style="left:95px;top:199px">ドキュメントの設定</div>
<svg style="position:absolute;left:48px;top:225px" width="10" height="14" viewBox="0 0 10 14" ><path d="M1 1L9 7L1 13z" fill="#e4e4e6" stroke="#333" stroke-width="1.2" stroke-linejoin="round"/></svg>
<svg style="position:absolute;left:69px;top:225px" width="16" height="13" viewBox="0 0 16 13" ><path d="M0 1h6l1.5 2H16v10H0z" fill="#999"/><path d="M0 3.5h16" stroke="#f0f0f0" stroke-width="0.8"/></svg>
<div class="rtxt" style="left:99px;top:223px">名前の付いたビュー</div>
<svg style="position:absolute;left:48px;top:249px" width="10" height="14" viewBox="0 0 10 14" ><path d="M1 1L9 7L1 13z" fill="#e4e4e6" stroke="#333" stroke-width="1.2" stroke-linejoin="round"/></svg>
<svg style="position:absolute;left:69px;top:249px" width="16" height="12" viewBox="0 0 16 12" ><path d="M1 6C3.5 2.5 12.5 2.5 15 6C12.5 9.5 3.5 9.5 1 6z" fill="none" stroke="#aaa" stroke-width="1.1"/><circle cx="8" cy="6" r="2" fill="none" stroke="#aaa"/><path d="M3 1L13 11" stroke="#aaa" stroke-width="1.1"/></svg>
<svg style="position:absolute;left:94px;top:249px" width="16" height="13" viewBox="0 0 16 13" ><path d="M0 1h6l1.5 2H16v10H0z" fill="#999"/><path d="M0 3.5h16" stroke="#f0f0f0" stroke-width="0.8"/></svg>
<div class="rtxt" style="left:124px;top:247px">原点</div>
<svg style="position:absolute;left:47px;top:274px" width="11" height="11" viewBox="0 0 11 11" ><defs><linearGradient id="tg274" x1="0" x2="1"><stop offset="0" stop-color="#fff"/><stop offset="1" stop-color="#777"/></linearGradient></defs><path d="M10.5 0.5V10.5H0.5z" fill="url(#tg274)" stroke="#222" stroke-width="1"/></svg>
<svg style="position:absolute;left:68px;top:274px" width="18" height="12" viewBox="0 0 18 12" ><path d="M0.5 6C3.5 0.5 14.5 0.5 17.5 6C14.5 11.5 3.5 11.5 0.5 6z" fill="#8e8e8e"/><circle cx="9" cy="6" r="3.1" fill="#eeeeee"/><circle cx="9" cy="6" r="1.7" fill="#8e8e8e"/></svg>
<svg style="position:absolute;left:94px;top:273px" width="16" height="13" viewBox="0 0 16 13" ><path d="M0 1h6l1.5 2H16v10H0z" fill="#999"/><path d="M0 3.5h16" stroke="#f0f0f0" stroke-width="0.8"/></svg>
<div class="rtxt" style="left:124px;top:271px">ボディ</div>
<svg style="position:absolute;left:65px;top:298px" width="11" height="11" viewBox="0 0 11 11" ><defs><linearGradient id="tg298" x1="0" x2="1"><stop offset="0" stop-color="#fff"/><stop offset="1" stop-color="#777"/></linearGradient></defs><path d="M10.5 0.5V10.5H0.5z" fill="url(#tg298)" stroke="#222" stroke-width="1"/></svg>
<svg style="position:absolute;left:86px;top:298px" width="18" height="12" viewBox="0 0 18 12" ><path d="M0.5 6C3.5 0.5 14.5 0.5 17.5 6C14.5 11.5 3.5 11.5 0.5 6z" fill="#8e8e8e"/><circle cx="9" cy="6" r="3.1" fill="#eeeeee"/><circle cx="9" cy="6" r="1.7" fill="#8e8e8e"/></svg>
<svg style="position:absolute;left:112px;top:297px" width="16" height="13" viewBox="0 0 16 13" ><path d="M0 1h6l1.5 2H16v10H0z" fill="#999"/><path d="M0 3.5h16" stroke="#f0f0f0" stroke-width="0.8"/></svg>
<div class="rtxt" style="left:142px;top:295px">キーボード (6)</div>
<svg style="position:absolute;left:104px;top:322px" width="18" height="12" viewBox="0 0 18 12" ><path d="M0.5 6C3.5 0.5 14.5 0.5 17.5 6C14.5 11.5 3.5 11.5 0.5 6z" fill="#8e8e8e"/><circle cx="9" cy="6" r="3.1" fill="#eeeeee"/><circle cx="9" cy="6" r="1.7" fill="#8e8e8e"/></svg>
<svg style="position:absolute;left:130px;top:320px" width="17" height="16" viewBox="0 0 17 16" ><defs><linearGradient id="bg320" x1="0" x2="1"><stop offset="0" stop-color="#ffffff"/><stop offset="1" stop-color="#c9ced6"/></linearGradient></defs><rect x="1" y="1" width="15" height="14" rx="4" fill="url(#bg320)" stroke="#444" stroke-width="1.2"/><path d="M1.5 4.5C5 3 12 3 15.5 4.5" fill="none" stroke="#999" stroke-width="0.7"/></svg>
<div class="rtxt" style="left:160px;top:319px">キーボード下面</div>
<svg style="position:absolute;left:104px;top:346px" width="18" height="12" viewBox="0 0 18 12" ><path d="M0.5 6C3.5 0.5 14.5 0.5 17.5 6C14.5 11.5 3.5 11.5 0.5 6z" fill="#8e8e8e"/><circle cx="9" cy="6" r="3.1" fill="#eeeeee"/><circle cx="9" cy="6" r="1.7" fill="#8e8e8e"/></svg>
<svg style="position:absolute;left:130px;top:344px" width="17" height="16" viewBox="0 0 17 16" ><defs><linearGradient id="bg344" x1="0" x2="1"><stop offset="0" stop-color="#ffffff"/><stop offset="1" stop-color="#c9ced6"/></linearGradient></defs><rect x="1" y="1" width="15" height="14" rx="4" fill="url(#bg344)" stroke="#444" stroke-width="1.2"/><path d="M1.5 4.5C5 3 12 3 15.5 4.5" fill="none" stroke="#999" stroke-width="0.7"/></svg>
<div class="rtxt" style="left:160px;top:343px">キーボード足左</div>
<svg style="position:absolute;left:104px;top:370px" width="18" height="12" viewBox="0 0 18 12" ><path d="M0.5 6C3.5 0.5 14.5 0.5 17.5 6C14.5 11.5 3.5 11.5 0.5 6z" fill="#8e8e8e"/><circle cx="9" cy="6" r="3.1" fill="#eeeeee"/><circle cx="9" cy="6" r="1.7" fill="#8e8e8e"/></svg>
<svg style="position:absolute;left:130px;top:368px" width="17" height="16" viewBox="0 0 17 16" ><defs><linearGradient id="bg368" x1="0" x2="1"><stop offset="0" stop-color="#ffffff"/><stop offset="1" stop-color="#c9ced6"/></linearGradient></defs><rect x="1" y="1" width="15" height="14" rx="4" fill="url(#bg368)" stroke="#444" stroke-width="1.2"/><path d="M1.5 4.5C5 3 12 3 15.5 4.5" fill="none" stroke="#999" stroke-width="0.7"/></svg>
<div class="rtxt" style="left:160px;top:367px">キーボード足右</div>
<svg style="position:absolute;left:104px;top:394px" width="18" height="12" viewBox="0 0 18 12" ><path d="M0.5 6C3.5 0.5 14.5 0.5 17.5 6C14.5 11.5 3.5 11.5 0.5 6z" fill="#8e8e8e"/><circle cx="9" cy="6" r="3.1" fill="#eeeeee"/><circle cx="9" cy="6" r="1.7" fill="#8e8e8e"/></svg>
<svg style="position:absolute;left:130px;top:392px" width="17" height="16" viewBox="0 0 17 16" ><defs><linearGradient id="bg392" x1="0" x2="1"><stop offset="0" stop-color="#ffffff"/><stop offset="1" stop-color="#c9ced6"/></linearGradient></defs><rect x="1" y="1" width="15" height="14" rx="4" fill="url(#bg392)" stroke="#444" stroke-width="1.2"/><path d="M1.5 4.5C5 3 12 3 15.5 4.5" fill="none" stroke="#999" stroke-width="0.7"/></svg>
<div class="rtxt" style="left:160px;top:391px">キーボード上面</div>
<svg style="position:absolute;left:104px;top:418px" width="18" height="12" viewBox="0 0 18 12" ><path d="M0.5 6C3.5 0.5 14.5 0.5 17.5 6C14.5 11.5 3.5 11.5 0.5 6z" fill="#8e8e8e"/><circle cx="9" cy="6" r="3.1" fill="#eeeeee"/><circle cx="9" cy="6" r="1.7" fill="#8e8e8e"/></svg>
<svg style="position:absolute;left:130px;top:416px" width="17" height="16" viewBox="0 0 17 16" ><defs><linearGradient id="bg416" x1="0" x2="1"><stop offset="0" stop-color="#ffffff"/><stop offset="1" stop-color="#c9ced6"/></linearGradient></defs><rect x="1" y="1" width="15" height="14" rx="4" fill="url(#bg416)" stroke="#444" stroke-width="1.2"/><path d="M1.5 4.5C5 3 12 3 15.5 4.5" fill="none" stroke="#999" stroke-width="0.7"/></svg>
<div class="rtxt" style="left:160px;top:415px">キーボード</div>
<svg style="position:absolute;left:104px;top:442px" width="18" height="12" viewBox="0 0 18 12" ><path d="M0.5 6C3.5 0.5 14.5 0.5 17.5 6C14.5 11.5 3.5 11.5 0.5 6z" fill="#8e8e8e"/><circle cx="9" cy="6" r="3.1" fill="#eeeeee"/><circle cx="9" cy="6" r="1.7" fill="#8e8e8e"/></svg>
<svg style="position:absolute;left:130px;top:440px" width="17" height="16" viewBox="0 0 17 16" ><defs><linearGradient id="bg440" x1="0" x2="1"><stop offset="0" stop-color="#ffffff"/><stop offset="1" stop-color="#c9ced6"/></linearGradient></defs><rect x="1" y="1" width="15" height="14" rx="4" fill="url(#bg440)" stroke="#444" stroke-width="1.2"/><path d="M1.5 4.5C5 3 12 3 15.5 4.5" fill="none" stroke="#999" stroke-width="0.7"/></svg>
<div class="rtxt" style="left:160px;top:439px">キーボードコネクタ (1)</div>
<svg style="position:absolute;left:86px;top:466px" width="18" height="12" viewBox="0 0 18 12" ><path d="M0.5 6C3.5 0.5 14.5 0.5 17.5 6C14.5 11.5 3.5 11.5 0.5 6z" fill="#8e8e8e"/><circle cx="9" cy="6" r="3.1" fill="#eeeeee"/><circle cx="9" cy="6" r="1.7" fill="#8e8e8e"/></svg>
<svg style="position:absolute;left:112px;top:464px" width="17" height="16" viewBox="0 0 17 16" ><defs><linearGradient id="bg464" x1="0" x2="1"><stop offset="0" stop-color="#ffffff"/><stop offset="1" stop-color="#c9ced6"/></linearGradient></defs><rect x="1" y="1" width="15" height="14" rx="4" fill="url(#bg464)" stroke="#444" stroke-width="1.2"/><path d="M1.5 4.5C5 3 12 3 15.5 4.5" fill="none" stroke="#999" stroke-width="0.7"/></svg>
<div class="rtxt" style="left:142px;top:463px">フロントパネル</div>
<svg style="position:absolute;left:86px;top:490px" width="18" height="12" viewBox="0 0 18 12" ><path d="M0.5 6C3.5 0.5 14.5 0.5 17.5 6C14.5 11.5 3.5 11.5 0.5 6z" fill="#8e8e8e"/><circle cx="9" cy="6" r="3.1" fill="#eeeeee"/><circle cx="9" cy="6" r="1.7" fill="#8e8e8e"/></svg>
<svg style="position:absolute;left:112px;top:488px" width="17" height="16" viewBox="0 0 17 16" ><defs><linearGradient id="bg488" x1="0" x2="1"><stop offset="0" stop-color="#ffffff"/><stop offset="1" stop-color="#c9ced6"/></linearGradient></defs><rect x="1" y="1" width="15" height="14" rx="4" fill="url(#bg488)" stroke="#444" stroke-width="1.2"/><path d="M1.5 4.5C5 3 12 3 15.5 4.5" fill="none" stroke="#999" stroke-width="0.7"/></svg>
<div class="rtxt" style="left:142px;top:487px">フロントパネル・ライン</div>
<svg style="position:absolute;left:86px;top:514px" width="18" height="12" viewBox="0 0 18 12" ><path d="M0.5 6C3.5 0.5 14.5 0.5 17.5 6C14.5 11.5 3.5 11.5 0.5 6z" fill="#8e8e8e"/><circle cx="9" cy="6" r="3.1" fill="#eeeeee"/><circle cx="9" cy="6" r="1.7" fill="#8e8e8e"/></svg>
<svg style="position:absolute;left:112px;top:512px" width="17" height="16" viewBox="0 0 17 16" ><defs><linearGradient id="bg512" x1="0" x2="1"><stop offset="0" stop-color="#ffffff"/><stop offset="1" stop-color="#c9ced6"/></linearGradient></defs><rect x="1" y="1" width="15" height="14" rx="4" fill="url(#bg512)" stroke="#444" stroke-width="1.2"/><path d="M1.5 4.5C5 3 12 3 15.5 4.5" fill="none" stroke="#999" stroke-width="0.7"/></svg>
<div class="rtxt" style="left:142px;top:511px">ボディ底面</div>
<svg style="position:absolute;left:86px;top:538px" width="18" height="12" viewBox="0 0 18 12" ><path d="M0.5 6C3.5 0.5 14.5 0.5 17.5 6C14.5 11.5 3.5 11.5 0.5 6z" fill="#8e8e8e"/><circle cx="9" cy="6" r="3.1" fill="#eeeeee"/><circle cx="9" cy="6" r="1.7" fill="#8e8e8e"/></svg>
<svg style="position:absolute;left:112px;top:536px" width="17" height="16" viewBox="0 0 17 16" ><defs><linearGradient id="bg536" x1="0" x2="1"><stop offset="0" stop-color="#ffffff"/><stop offset="1" stop-color="#c9ced6"/></linearGradient></defs><rect x="1" y="1" width="15" height="14" rx="4" fill="url(#bg536)" stroke="#444" stroke-width="1.2"/><path d="M1.5 4.5C5 3 12 3 15.5 4.5" fill="none" stroke="#999" stroke-width="0.7"/></svg>
<div class="rtxt" style="left:142px;top:535px">ボディ底面・後</div>
<svg style="position:absolute;left:86px;top:562px" width="18" height="12" viewBox="0 0 18 12" ><path d="M0.5 6C3.5 0.5 14.5 0.5 17.5 6C14.5 11.5 3.5 11.5 0.5 6z" fill="#8e8e8e"/><circle cx="9" cy="6" r="3.1" fill="#eeeeee"/><circle cx="9" cy="6" r="1.7" fill="#8e8e8e"/></svg>
<svg style="position:absolute;left:112px;top:560px" width="17" height="16" viewBox="0 0 17 16" ><defs><linearGradient id="bg560" x1="0" x2="1"><stop offset="0" stop-color="#ffffff"/><stop offset="1" stop-color="#c9ced6"/></linearGradient></defs><rect x="1" y="1" width="15" height="14" rx="4" fill="url(#bg560)" stroke="#444" stroke-width="1.2"/><path d="M1.5 4.5C5 3 12 3 15.5 4.5" fill="none" stroke="#999" stroke-width="0.7"/></svg>
<div class="rtxt" style="left:142px;top:559px">FDDパネル2</div>
<svg style="position:absolute;left:86px;top:586px" width="18" height="12" viewBox="0 0 18 12" ><path d="M0.5 6C3.5 0.5 14.5 0.5 17.5 6C14.5 11.5 3.5 11.5 0.5 6z" fill="#8e8e8e"/><circle cx="9" cy="6" r="3.1" fill="#eeeeee"/><circle cx="9" cy="6" r="1.7" fill="#8e8e8e"/></svg>
<svg style="position:absolute;left:112px;top:584px" width="17" height="16" viewBox="0 0 17 16" ><defs><linearGradient id="bg584" x1="0" x2="1"><stop offset="0" stop-color="#ffffff"/><stop offset="1" stop-color="#c9ced6"/></linearGradient></defs><rect x="1" y="1" width="15" height="14" rx="4" fill="url(#bg584)" stroke="#444" stroke-width="1.2"/><path d="M1.5 4.5C5 3 12 3 15.5 4.5" fill="none" stroke="#999" stroke-width="0.7"/></svg>
<div class="rtxt" style="left:142px;top:583px">FDDパネル1</div>
<svg style="position:absolute;left:86px;top:610px" width="18" height="12" viewBox="0 0 18 12" ><path d="M0.5 6C3.5 0.5 14.5 0.5 17.5 6C14.5 11.5 3.5 11.5 0.5 6z" fill="#8e8e8e"/><circle cx="9" cy="6" r="3.1" fill="#eeeeee"/><circle cx="9" cy="6" r="1.7" fill="#8e8e8e"/></svg>
<svg style="position:absolute;left:112px;top:608px" width="17" height="16" viewBox="0 0 17 16" ><defs><linearGradient id="bg608" x1="0" x2="1"><stop offset="0" stop-color="#ffffff"/><stop offset="1" stop-color="#c9ced6"/></linearGradient></defs><rect x="1" y="1" width="15" height="14" rx="4" fill="url(#bg608)" stroke="#444" stroke-width="1.2"/><path d="M1.5 4.5C5 3 12 3 15.5 4.5" fill="none" stroke="#999" stroke-width="0.7"/></svg>
<div class="rtxt" style="left:142px;top:607px">FDD1・LED</div>
<svg style="position:absolute;left:86px;top:634px" width="18" height="12" viewBox="0 0 18 12" ><path d="M0.5 6C3.5 0.5 14.5 0.5 17.5 6C14.5 11.5 3.5 11.5 0.5 6z" fill="#8e8e8e"/><circle cx="9" cy="6" r="3.1" fill="#eeeeee"/><circle cx="9" cy="6" r="1.7" fill="#8e8e8e"/></svg>
<svg style="position:absolute;left:112px;top:632px" width="17" height="16" viewBox="0 0 17 16" ><defs><linearGradient id="bg632" x1="0" x2="1"><stop offset="0" stop-color="#ffffff"/><stop offset="1" stop-color="#c9ced6"/></linearGradient></defs><rect x="1" y="1" width="15" height="14" rx="4" fill="url(#bg632)" stroke="#444" stroke-width="1.2"/><path d="M1.5 4.5C5 3 12 3 15.5 4.5" fill="none" stroke="#999" stroke-width="0.7"/></svg>
<div class="rtxt" style="left:142px;top:631px">FDD2・LED</div>
<svg style="position:absolute;left:86px;top:658px" width="18" height="12" viewBox="0 0 18 12" ><path d="M0.5 6C3.5 0.5 14.5 0.5 17.5 6C14.5 11.5 3.5 11.5 0.5 6z" fill="#8e8e8e"/><circle cx="9" cy="6" r="3.1" fill="#eeeeee"/><circle cx="9" cy="6" r="1.7" fill="#8e8e8e"/></svg>
<svg style="position:absolute;left:112px;top:656px" width="17" height="16" viewBox="0 0 17 16" ><defs><linearGradient id="bg656" x1="0" x2="1"><stop offset="0" stop-color="#ffffff"/><stop offset="1" stop-color="#c9ced6"/></linearGradient></defs><rect x="1" y="1" width="15" height="14" rx="4" fill="url(#bg656)" stroke="#444" stroke-width="1.2"/><path d="M1.5 4.5C5 3 12 3 15.5 4.5" fill="none" stroke="#999" stroke-width="0.7"/></svg>
<div class="rtxt" style="left:142px;top:655px">電源LED</div>
<svg style="position:absolute;left:86px;top:682px" width="18" height="12" viewBox="0 0 18 12" ><path d="M0.5 6C3.5 0.5 14.5 0.5 17.5 6C14.5 11.5 3.5 11.5 0.5 6z" fill="#8e8e8e"/><circle cx="9" cy="6" r="3.1" fill="#eeeeee"/><circle cx="9" cy="6" r="1.7" fill="#8e8e8e"/></svg>
<svg style="position:absolute;left:112px;top:680px" width="17" height="16" viewBox="0 0 17 16" ><defs><linearGradient id="bg680" x1="0" x2="1"><stop offset="0" stop-color="#ffffff"/><stop offset="1" stop-color="#c9ced6"/></linearGradient></defs><rect x="1" y="1" width="15" height="14" rx="4" fill="url(#bg680)" stroke="#444" stroke-width="1.2"/><path d="M1.5 4.5C5 3 12 3 15.5 4.5" fill="none" stroke="#999" stroke-width="0.7"/></svg>
<div class="rtxt" style="left:142px;top:679px">フロントパネル・ポケット</div>
<svg style="position:absolute;left:86px;top:706px" width="18" height="12" viewBox="0 0 18 12" ><path d="M0.5 6C3.5 0.5 14.5 0.5 17.5 6C14.5 11.5 3.5 11.5 0.5 6z" fill="#8e8e8e"/><circle cx="9" cy="6" r="3.1" fill="#eeeeee"/><circle cx="9" cy="6" r="1.7" fill="#8e8e8e"/></svg>
<svg style="position:absolute;left:112px;top:704px" width="17" height="16" viewBox="0 0 17 16" ><defs><linearGradient id="bg704" x1="0" x2="1"><stop offset="0" stop-color="#ffffff"/><stop offset="1" stop-color="#c9ced6"/></linearGradient></defs><rect x="1" y="1" width="15" height="14" rx="4" fill="url(#bg704)" stroke="#444" stroke-width="1.2"/><path d="M1.5 4.5C5 3 12 3 15.5 4.5" fill="none" stroke="#999" stroke-width="0.7"/></svg>
<div class="rtxt" style="left:142px;top:703px">リセットボタン</div>
<svg style="position:absolute;left:86px;top:730px" width="18" height="12" viewBox="0 0 18 12" ><path d="M0.5 6C3.5 0.5 14.5 0.5 17.5 6C14.5 11.5 3.5 11.5 0.5 6z" fill="#8e8e8e"/><circle cx="9" cy="6" r="3.1" fill="#eeeeee"/><circle cx="9" cy="6" r="1.7" fill="#8e8e8e"/></svg>
<svg style="position:absolute;left:112px;top:728px" width="17" height="16" viewBox="0 0 17 16" ><defs><linearGradient id="bg728" x1="0" x2="1"><stop offset="0" stop-color="#ffffff"/><stop offset="1" stop-color="#c9ced6"/></linearGradient></defs><rect x="1" y="1" width="15" height="14" rx="4" fill="url(#bg728)" stroke="#444" stroke-width="1.2"/><path d="M1.5 4.5C5 3 12 3 15.5 4.5" fill="none" stroke="#999" stroke-width="0.7"/></svg>
<div class="rtxt" style="left:142px;top:727px">FDDパネル１ (1) (2)</div>
<svg style="position:absolute;left:86px;top:754px" width="18" height="12" viewBox="0 0 18 12" ><path d="M0.5 6C3.5 0.5 14.5 0.5 17.5 6C14.5 11.5 3.5 11.5 0.5 6z" fill="#8e8e8e"/><circle cx="9" cy="6" r="3.1" fill="#eeeeee"/><circle cx="9" cy="6" r="1.7" fill="#8e8e8e"/></svg>
<svg style="position:absolute;left:112px;top:752px" width="17" height="16" viewBox="0 0 17 16" ><defs><linearGradient id="bg752" x1="0" x2="1"><stop offset="0" stop-color="#ffffff"/><stop offset="1" stop-color="#c9ced6"/></linearGradient></defs><rect x="1" y="1" width="15" height="14" rx="4" fill="url(#bg752)" stroke="#444" stroke-width="1.2"/><path d="M1.5 4.5C5 3 12 3 15.5 4.5" fill="none" stroke="#999" stroke-width="0.7"/></svg>
<div class="rtxt" style="left:142px;top:751px">FDDパネル１ (1) (2) (1)</div>
<svg style="position:absolute;left:86px;top:778px" width="18" height="12" viewBox="0 0 18 12" ><path d="M0.5 6C3.5 0.5 14.5 0.5 17.5 6C14.5 11.5 3.5 11.5 0.5 6z" fill="#8e8e8e"/><circle cx="9" cy="6" r="3.1" fill="#eeeeee"/><circle cx="9" cy="6" r="1.7" fill="#8e8e8e"/></svg>
<svg style="position:absolute;left:112px;top:776px" width="17" height="16" viewBox="0 0 17 16" ><defs><linearGradient id="bg776" x1="0" x2="1"><stop offset="0" stop-color="#ffffff"/><stop offset="1" stop-color="#c9ced6"/></linearGradient></defs><rect x="1" y="1" width="15" height="14" rx="4" fill="url(#bg776)" stroke="#444" stroke-width="1.2"/><path d="M1.5 4.5C5 3 12 3 15.5 4.5" fill="none" stroke="#999" stroke-width="0.7"/></svg>
<div class="rtxt" style="left:142px;top:775px">電源SW</div>
<svg style="position:absolute;left:86px;top:802px" width="18" height="12" viewBox="0 0 18 12" ><path d="M0.5 6C3.5 0.5 14.5 0.5 17.5 6C14.5 11.5 3.5 11.5 0.5 6z" fill="#8e8e8e"/><circle cx="9" cy="6" r="3.1" fill="#eeeeee"/><circle cx="9" cy="6" r="1.7" fill="#8e8e8e"/></svg>
<svg style="position:absolute;left:112px;top:800px" width="17" height="16" viewBox="0 0 17 16" ><defs><linearGradient id="bg800" x1="0" x2="1"><stop offset="0" stop-color="#ffffff"/><stop offset="1" stop-color="#c9ced6"/></linearGradient></defs><rect x="1" y="1" width="15" height="14" rx="4" fill="url(#bg800)" stroke="#444" stroke-width="1.2"/><path d="M1.5 4.5C5 3 12 3 15.5 4.5" fill="none" stroke="#999" stroke-width="0.7"/></svg>
<div class="rtxt" style="left:142px;top:799px">内部フレーム</div>
<svg style="position:absolute;left:86px;top:826px" width="18" height="12" viewBox="0 0 18 12" ><path d="M0.5 6C3.5 0.5 14.5 0.5 17.5 6C14.5 11.5 3.5 11.5 0.5 6z" fill="#8e8e8e"/><circle cx="9" cy="6" r="3.1" fill="#eeeeee"/><circle cx="9" cy="6" r="1.7" fill="#8e8e8e"/></svg>
<svg style="position:absolute;left:112px;top:824px" width="17" height="16" viewBox="0 0 17 16" ><defs><linearGradient id="bg824" x1="0" x2="1"><stop offset="0" stop-color="#ffffff"/><stop offset="1" stop-color="#c9ced6"/></linearGradient></defs><rect x="1" y="1" width="15" height="14" rx="4" fill="url(#bg824)" stroke="#444" stroke-width="1.2"/><path d="M1.5 4.5C5 3 12 3 15.5 4.5" fill="none" stroke="#999" stroke-width="0.7"/></svg>
<div class="rtxt" style="left:142px;top:823px">ボディ上面 (2)</div>
<svg style="position:absolute;left:86px;top:850px" width="18" height="12" viewBox="0 0 18 12" ><path d="M0.5 6C3.5 0.5 14.5 0.5 17.5 6C14.5 11.5 3.5 11.5 0.5 6z" fill="#8e8e8e"/><circle cx="9" cy="6" r="3.1" fill="#eeeeee"/><circle cx="9" cy="6" r="1.7" fill="#8e8e8e"/></svg>
<svg style="position:absolute;left:112px;top:848px" width="17" height="16" viewBox="0 0 17 16" ><defs><linearGradient id="bg848" x1="0" x2="1"><stop offset="0" stop-color="#ffffff"/><stop offset="1" stop-color="#c9ced6"/></linearGradient></defs><rect x="1" y="1" width="15" height="14" rx="4" fill="url(#bg848)" stroke="#444" stroke-width="1.2"/><path d="M1.5 4.5C5 3 12 3 15.5 4.5" fill="none" stroke="#999" stroke-width="0.7"/></svg>
<div class="rtxt" style="left:142px;top:847px">ボディ上面 (1) (1)</div>
<svg style="position:absolute;left:86px;top:874px" width="18" height="12" viewBox="0 0 18 12" ><path d="M0.5 6C3.5 0.5 14.5 0.5 17.5 6C14.5 11.5 3.5 11.5 0.5 6z" fill="#8e8e8e"/><circle cx="9" cy="6" r="3.1" fill="#eeeeee"/><circle cx="9" cy="6" r="1.7" fill="#8e8e8e"/></svg>
<svg style="position:absolute;left:112px;top:872px" width="17" height="16" viewBox="0 0 17 16" ><defs><linearGradient id="bg872" x1="0" x2="1"><stop offset="0" stop-color="#ffffff"/><stop offset="1" stop-color="#c9ced6"/></linearGradient></defs><rect x="1" y="1" width="15" height="14" rx="4" fill="url(#bg872)" stroke="#444" stroke-width="1.2"/><path d="M1.5 4.5C5 3 12 3 15.5 4.5" fill="none" stroke="#999" stroke-width="0.7"/></svg>
<div class="rtxt" style="left:142px;top:871px">ボディ上面 (1) (1) (1) (1)</div>
<svg style="position:absolute;left:86px;top:898px" width="18" height="12" viewBox="0 0 18 12" ><path d="M0.5 6C3.5 0.5 14.5 0.5 17.5 6C14.5 11.5 3.5 11.5 0.5 6z" fill="#8e8e8e"/><circle cx="9" cy="6" r="3.1" fill="#eeeeee"/><circle cx="9" cy="6" r="1.7" fill="#8e8e8e"/></svg>
<svg style="position:absolute;left:112px;top:896px" width="17" height="16" viewBox="0 0 17 16" ><defs><linearGradient id="bg896" x1="0" x2="1"><stop offset="0" stop-color="#ffffff"/><stop offset="1" stop-color="#c9ced6"/></linearGradient></defs><rect x="1" y="1" width="15" height="14" rx="4" fill="url(#bg896)" stroke="#444" stroke-width="1.2"/><path d="M1.5 4.5C5 3 12 3 15.5 4.5" fill="none" stroke="#999" stroke-width="0.7"/></svg>
<div class="rtxt" style="left:142px;top:895px">ボディ上面 (1) (1) (1)</div>
<svg style="position:absolute;left:86px;top:922px" width="18" height="12" viewBox="0 0 18 12" ><path d="M0.5 6C3.5 0.5 14.5 0.5 17.5 6C14.5 11.5 3.5 11.5 0.5 6z" fill="#8e8e8e"/><circle cx="9" cy="6" r="3.1" fill="#eeeeee"/><circle cx="9" cy="6" r="1.7" fill="#8e8e8e"/></svg>
<svg style="position:absolute;left:112px;top:920px" width="17" height="16" viewBox="0 0 17 16" ><defs><linearGradient id="bg920" x1="0" x2="1"><stop offset="0" stop-color="#ffffff"/><stop offset="1" stop-color="#c9ced6"/></linearGradient></defs><rect x="1" y="1" width="15" height="14" rx="4" fill="url(#bg920)" stroke="#444" stroke-width="1.2"/><path d="M1.5 4.5C5 3 12 3 15.5 4.5" fill="none" stroke="#999" stroke-width="0.7"/></svg>
<div class="rtxt" style="left:142px;top:919px">内部フレーム (1)</div>
<svg style="position:absolute;left:48px;top:945px" width="10" height="14" viewBox="0 0 10 14" ><path d="M1 1L9 7L1 13z" fill="#e4e4e6" stroke="#333" stroke-width="1.2" stroke-linejoin="round"/></svg>
<svg style="position:absolute;left:68px;top:946px" width="18" height="12" viewBox="0 0 18 12" ><path d="M0.5 6C3.5 0.5 14.5 0.5 17.5 6C14.5 11.5 3.5 11.5 0.5 6z" fill="#8e8e8e"/><circle cx="9" cy="6" r="3.1" fill="#eeeeee"/><circle cx="9" cy="6" r="1.7" fill="#8e8e8e"/></svg>
<svg style="position:absolute;left:94px;top:945px" width="16" height="13" viewBox="0 0 16 13" ><path d="M0 1h6l1.5 2H16v10H0z" fill="#999"/><path d="M0 3.5h16" stroke="#f0f0f0" stroke-width="0.8"/></svg>
<div class="rtxt" style="left:124px;top:943px">キャンバス</div>
<svg style="position:absolute;left:48px;top:969px" width="10" height="14" viewBox="0 0 10 14" ><path d="M1 1L9 7L1 13z" fill="#e4e4e6" stroke="#333" stroke-width="1.2" stroke-linejoin="round"/></svg>
<svg style="position:absolute;left:68px;top:970px" width="18" height="12" viewBox="0 0 18 12" ><path d="M0.5 6C3.5 0.5 14.5 0.5 17.5 6C14.5 11.5 3.5 11.5 0.5 6z" fill="#8e8e8e"/><circle cx="9" cy="6" r="3.1" fill="#eeeeee"/><circle cx="9" cy="6" r="1.7" fill="#8e8e8e"/></svg>
<svg style="position:absolute;left:94px;top:969px" width="16" height="13" viewBox="0 0 16 13" ><path d="M0 1h6l1.5 2H16v10H0z" fill="#999"/><path d="M0 3.5h16" stroke="#f0f0f0" stroke-width="0.8"/></svg>
<div class="rtxt" style="left:124px;top:967px">スケッチ</div>
<svg style="position:absolute;left:48px;top:993px" width="10" height="14" viewBox="0 0 10 14" ><path d="M1 1L9 7L1 13z" fill="#e4e4e6" stroke="#333" stroke-width="1.2" stroke-linejoin="round"/></svg>
<svg style="position:absolute;left:68px;top:994px" width="18" height="12" viewBox="0 0 18 12" ><path d="M0.5 6C3.5 0.5 14.5 0.5 17.5 6C14.5 11.5 3.5 11.5 0.5 6z" fill="#8e8e8e"/><circle cx="9" cy="6" r="3.1" fill="#eeeeee"/><circle cx="9" cy="6" r="1.7" fill="#8e8e8e"/></svg>
<svg style="position:absolute;left:94px;top:993px" width="16" height="13" viewBox="0 0 16 13" ><path d="M0 1h6l1.5 2H16v10H0z" fill="#999"/><path d="M0 3.5h16" stroke="#f0f0f0" stroke-width="0.8"/></svg>
<div class="rtxt" style="left:124px;top:991px">コンストラクション</div>
<svg style="position:absolute;left:68px;top:1015px" width="16" height="18" viewBox="0 0 16 18" ><path d="M1 5L4 2H11V13L8 16H1z" fill="#5aa6e0"/><path d="M4 2H11L8 5H1z" fill="#9dd0f5"/><path d="M8 5L11 2V13L8 16z" fill="#3d86c6"/><path d="M1 16H8L11 13V14.5L8 17.5H1z" fill="#c8c8c8"/><path d="M14 14V2M12.3 4L14 1.5L15.7 4" stroke="#222" stroke-width="1.1" fill="none"/></svg>
<div class="rtxt" style="left:99px;top:1015px">押し出し2612</div>
<svg style="position:absolute;left:68px;top:1039px" width="16" height="18" viewBox="0 0 16 18" ><path d="M1 5L4 2H11V13L8 16H1z" fill="#5aa6e0"/><path d="M4 2H11L8 5H1z" fill="#9dd0f5"/><path d="M8 5L11 2V13L8 16z" fill="#3d86c6"/><path d="M1 16H8L11 13V14.5L8 17.5H1z" fill="#c8c8c8"/><path d="M14 14V2M12.3 4L14 1.5L15.7 4" stroke="#222" stroke-width="1.1" fill="none"/></svg>
<div class="rtxt" style="left:99px;top:1039px">押し出し2613</div>
<svg style="position:absolute;left:68px;top:1064px" width="16" height="15" viewBox="0 0 16 15" ><path d="M1 14V5L4 1.5H8L5 14z" fill="#ddd" stroke="#666" stroke-width="0.9"/><path d="M5 14L8 1.5L12 4L9 14z" fill="#4a9fe0"/><path d="M12 1L14.5 7" stroke="#222" stroke-width="1"/><path d="M11 2.5L12 0.5L13.5 2.3" stroke="#222" stroke-width="0.9" fill="none"/></svg>
<div class="rtxt" style="left:99px;top:1063px">勾配2614</div>
<svg style="position:absolute;left:68px;top:1088px" width="16" height="15" viewBox="0 0 16 15" ><path d="M1 14V5L4 1.5H8L5 14z" fill="#ddd" stroke="#666" stroke-width="0.9"/><path d="M5 14L8 1.5L12 4L9 14z" fill="#4a9fe0"/><path d="M12 1L14.5 7" stroke="#222" stroke-width="1"/><path d="M11 2.5L12 0.5L13.5 2.3" stroke="#222" stroke-width="0.9" fill="none"/></svg>
<div class="rtxt" style="left:99px;top:1087px">勾配2615</div>
<div style="position:absolute;left:850px;top:1130px;width:237px;height:24px;background:#f0f0f0"></div>
<svg style="position:absolute;left:852px;top:1133px" width="18" height="18" viewBox="0 0 18 18" ><path d="M9 1V17M6 4L9 0.5L12 4" stroke="#333" stroke-width="1.2" fill="none"/><path d="M7.5 3.5h3V16h-3z" fill="#fff" stroke="#333" stroke-width="0.8"/><path d="M4 9C0 10 0 13 4 14C8 15 14 14 16 12C17 10.5 15 9 12 9" fill="none" stroke="#333" stroke-width="1.3"/><path d="M1 13L4 11V16z" fill="#333"/></svg>
<svg style="position:absolute;left:874px;top:1140px" width="7" height="5" viewBox="0 0 7 5" ><path d="M0 0h6.5L3.25 4z" fill="#333"/></svg>
<svg style="position:absolute;left:885px;top:1133px" width="17" height="17" viewBox="0 0 17 17" ><rect x="1" y="6" width="15" height="10" fill="#fff" stroke="#444" stroke-width="1.1"/><rect x="4" y="9" width="9" height="4" fill="#999" stroke="#444" stroke-width="0.7"/><path d="M2 6L4 2L6 4L9 1.5L11 4L14 2V6" fill="#ddd" stroke="#444" stroke-width="0.8"/></svg>
<svg style="position:absolute;left:911px;top:1133px" width="18" height="18" viewBox="0 0 18 18" ><path d="M5 16C3 13 1 10 2 9C3 8 4 10 5 11V4C5 2.5 7 2.5 7 4V9V2.5C7 1 9 1 9 2.5V9V3C9 1.5 11 1.5 11 3V9V5C11 3.5 13 3.5 13 5V12C13 15 11 17 9 17z" fill="#eef" stroke="#333" stroke-width="0.9"/></svg>
<svg style="position:absolute;left:937px;top:1133px" width="18" height="18" viewBox="0 0 18 18" ><circle cx="7" cy="9" r="5" fill="#d5eef0" stroke="#333" stroke-width="1.1"/><path d="M10.5 12.5L15 17" stroke="#333" stroke-width="2.2"/><path d="M14 1V7M11 4H17" stroke="#333" stroke-width="1"/></svg>
<svg style="position:absolute;left:962px;top:1133px" width="20" height="18" viewBox="0 0 20 18" ><rect x="1" y="1" width="16" height="16" fill="none" stroke="#555" stroke-width="0.8" stroke-dasharray="1.5 1.2"/><circle cx="8" cy="8" r="6" fill="#d5eef0" stroke="#333" stroke-width="1.1"/><path d="M12 12L17 17" stroke="#333" stroke-width="2.2"/></svg>
<svg style="position:absolute;left:985px;top:1140px" width="7" height="5" viewBox="0 0 7 5" ><path d="M0 0h6.5L3.25 4z" fill="#333"/></svg>
<svg style="position:absolute;left:996px;top:1133px" width="18" height="18" viewBox="0 0 18 18" ><rect x="1" y="1" width="16" height="12" rx="1" fill="#8fb8e8" stroke="#444" stroke-width="1.3"/><path d="M7 14h4v2h3v1.5H4V16h3z" fill="#999"/></svg>
<svg style="position:absolute;left:1015px;top:1140px" width="7" height="5" viewBox="0 0 7 5" ><path d="M0 0h6.5L3.25 4z" fill="#333"/></svg>
<svg style="position:absolute;left:1027px;top:1133px" width="18" height="18" viewBox="0 0 18 18" ><rect x="1" y="1" width="16" height="16" fill="#999" stroke="#555"/><rect x="2" y="2" width="2.6" height="2.6" fill="#eee"/><rect x="2" y="5" width="2.6" height="2.6" fill="#eee"/><rect x="2" y="8" width="2.6" height="2.6" fill="#eee"/><rect x="2" y="11" width="2.6" height="2.6" fill="#eee"/><rect x="2" y="15" width="2.6" height="2.6" fill="#eee"/><rect x="5" y="2" width="2.6" height="2.6" fill="#eee"/><rect x="5" y="5" width="2.6" height="2.6" fill="#eee"/><rect x="5" y="8" width="2.6" height="2.6" fill="#eee"/><rect x="5" y="11" width="2.6" height="2.6" fill="#eee"/><rect x="5" y="15" width="2.6" height="2.6" fill="#eee"/><rect x="8" y="2" width="2.6" height="2.6" fill="#eee"/><rect x="8" y="5" width="2.6" height="2.6" fill="#eee"/><rect x="8" y="8" width="2.6" height="2.6" fill="#eee"/><rect x="8" y="11" width="2.6" height="2.6" fill="#eee"/><rect x="8" y="15" width="2.6" height="2.6" fill="#eee"/><rect x="11" y="2" width="2.6" height="2.6" fill="#eee"/><rect x="11" y="5" width="2.6" height="2.6" fill="#eee"/><rect x="11" y="8" width="2.6" height="2.6" fill="#eee"/><rect x="11" y="11" width="2.6" height="2.6" fill="#eee"/><rect x="11" y="15" width="2.6" height="2.6" fill="#eee"/><rect x="15" y="2" width="2.6" height="2.6" fill="#eee"/><rect x="15" y="5" width="2.6" height="2.6" fill="#eee"/><rect x="15" y="8" width="2.6" height="2.6" fill="#eee"/><rect x="15" y="11" width="2.6" height="2.6" fill="#eee"/><rect x="15" y="15" width="2.6" height="2.6" fill="#eee"/></svg>
<svg style="position:absolute;left:1046px;top:1140px" width="7" height="5" viewBox="0 0 7 5" ><path d="M0 0h6.5L3.25 4z" fill="#333"/></svg>
<svg style="position:absolute;left:1058px;top:1133px" width="18" height="18" viewBox="0 0 18 18" ><rect x="1" y="2" width="16" height="14" fill="#3558a0"/><rect x="2.5" y="3.5" width="5.7" height="4.8" fill="#8fb8e8"/><rect x="9.8" y="3.5" width="5.7" height="4.8" fill="#8fb8e8"/><rect x="2.5" y="9.8" width="5.7" height="4.8" fill="#8fb8e8"/><rect x="9.8" y="9.8" width="5.7" height="4.8" fill="#8fb8e8"/></svg>
<svg style="position:absolute;left:1078px;top:1140px" width="7" height="5" viewBox="0 0 7 5" ><path d="M0 0h6.5L3.25 4z" fill="#333"/></svg>
<div class="bhead" style="top:1132px;height:23px"><span class="btitle" style="left:25px;top:4px">コメント</span><span class="plus"></span></div>
<div style="position:absolute;left:0;top:0;width:8px;height:40px;background:#dfe4eb"></div>
<div style="position:absolute;left:0;top:40px;width:8px;height:47px;background:#dfe4eb"><div style="position:absolute;left:-20px;top:0;width:28px;height:47px;background:#fff;border-top-right-radius:9px"></div><div style="position:absolute;left:-6px;top:14px;width:8px;height:16px;border-radius:50%;background:#b9d3f5"></div></div>
<div style="position:absolute;left:0;top:87px;width:8px;height:1px;background:#d4d4d4"></div>
<div style="position:absolute;left:0;top:88px;width:8px;height:1071px;background:#fff"></div>
<svg style="position:absolute;left:0px;top:94px" width="4" height="4" viewBox="0 0 4 4" ><path d="M0 3.5L2 0.5L4 3.5z" fill="#555"/></svg>
<div style="position:absolute;left:0;top:104px;width:6px;height:381px;background:#5b5b5b"></div>
<svg style="position:absolute;left:0px;top:1026px" width="4" height="4" viewBox="0 0 4 4" ><path d="M0 0.5L2 3.5L4 0.5z" fill="#555"/></svg>
<div style="position:absolute;left:0;top:1040px;width:8px;height:119px;background:#000"></div>
<div style="position:absolute;left:0;top:1040px;width:8px;height:40px;background:#1b1b1b"></div>
<div style="position:absolute;left:-4px;top:1062px;color:#fff;font-size:11px;line-height:12px">3</div>
<div style="position:absolute;left:0;top:1159px;width:1928px;height:9px;background:#111"></div>
<div style="position:absolute;left:56px;top:1159px;width:288px;height:9px;background:#eeeeee"></div>
<div style="position:absolute;left:640px;top:1159px;width:48px;height:9px;background:#333"></div>
<div style="position:absolute;left:1923px;top:1159px;width:1px;height:9px;background:#777"></div>
</body></html>
